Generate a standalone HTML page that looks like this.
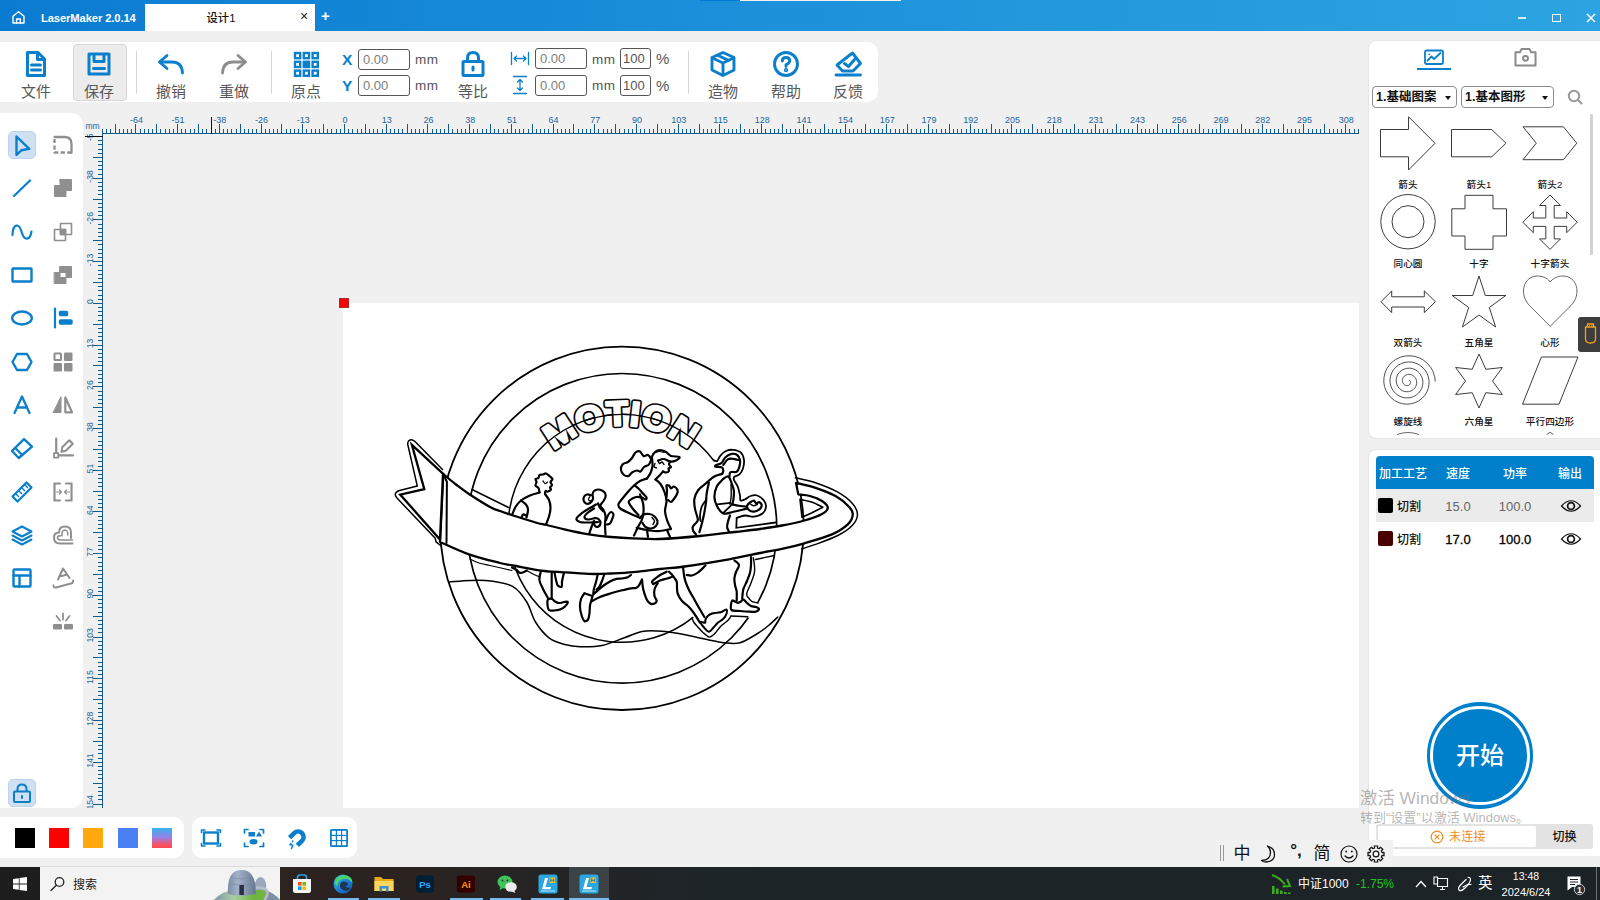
<!DOCTYPE html>
<html lang="zh-CN">
<head>
<meta charset="utf-8">
<title>LaserMaker 2.0.14</title>
<style>
*{box-sizing:border-box;margin:0;padding:0}
html,body{width:1600px;height:900px;overflow:hidden;background:#f0f0f0;font-family:"Liberation Sans","Noto Sans CJK SC",sans-serif;}
.abs,#app>*{position:absolute}
#app{position:relative;width:1600px;height:900px;overflow:hidden;background:#f0f0f0}
#app div{white-space:nowrap}
.panel{background:#fff}
#title{left:0;top:0;width:1600px;height:31px;background:linear-gradient(90deg,#0b7bd1 0%,#1f94db 55%,#2da4e1 100%)}
.lbl{font-size:15px;color:#585858;line-height:18px;text-align:center;width:60px}
.mm{font-size:13.5px;color:#555;line-height:16px;letter-spacing:0.6px}
.inp{border:1px solid #555;border-radius:3px;background:#fff;height:21px;font-size:13px;line-height:19px;color:#7e7e7e;padding-left:4px}
.sep{width:1px;background:#d4d4d4;top:51px;height:43px}
.ic{fill:none;stroke:#0a7fcb;stroke-width:3;stroke-linejoin:round;stroke-linecap:round}
.slab{width:80px;text-align:center;font-size:9.6px;line-height:16px;color:#111;font-weight:500;letter-spacing:0.1px}
.dd{height:22px;border:1px solid #8c8c8c;border-radius:4px;background:#fff;font-size:12.5px;line-height:20px;color:#111;font-weight:bold;padding-left:3px}
.dd i{position:absolute;right:5px;top:9px;border-left:3.5px solid transparent;border-right:3.5px solid transparent;border-top:4px solid #111}
.th{font-size:12px;line-height:16px;color:#fff;font-weight:500;text-align:center}
.td{font-size:13px;line-height:16px;text-align:center}
.tb{color:#fff;font-size:12px;line-height:16px}
</style>
</head>
<body>
<div id="app">
<!-- TITLE BAR -->
<div id="title"></div>
<div style="left:700px;top:0;width:40px;height:1px;background:#0078d7"></div>
<div style="left:740px;top:0;width:161px;height:1px;background:#f0f0f0"></div>
<svg style="left:11px;top:9.5px" width="15" height="15" viewBox="0 0 15 15" fill="none" stroke="#fff" stroke-width="1.4" stroke-linejoin="round" stroke-linecap="round"><path d="M2 6.2 L7.5 1.8 L13 6.2 V13 H2 Z"/><path d="M5.6 13 V9 H9.4 V13"/></svg>
<div style="left:41px;top:10px;font-size:11.2px;color:#fff;line-height:16px;font-weight:bold;letter-spacing:-0.1px">LaserMaker 2.0.14</div>
<div style="left:145px;top:4px;width:170px;height:27px;background:#fff"></div>
<div style="left:145px;width:152px;top:10px;text-align:center;font-size:11.3px;line-height:16px;color:#111;font-weight:500">设计1</div>
<div style="left:300px;top:8px;font-size:14px;line-height:16px;color:#222">×</div>
<div style="left:321px;top:8px;font-size:15px;line-height:16px;color:#fff;font-weight:bold">+</div>
<div style="left:1518px;top:17px;width:8px;height:1.5px;background:#d8ecf8"></div>
<div style="left:1552px;top:14px;width:8.5px;height:8px;border:1.5px solid #fff"></div>
<svg style="left:1585.5px;top:13px" width="10" height="10" viewBox="0 0 10 10" stroke="#fff" stroke-width="1.5"><path d="M1 1 L9 9 M9 1 L1 9"/></svg>

<!-- TOP TOOLBAR -->
<div class="panel" style="left:-1px;top:42px;width:879px;height:60px;border-radius:0 10px 10px 0"></div>
<div style="left:73px;top:44px;width:54px;height:57px;background:#ececec;border:1px solid #d6d6d6;border-radius:4px"></div>
<div class="lbl" style="left:6px;top:83px">文件</div>
<div class="lbl" style="left:69px;top:83px">保存</div>
<div class="lbl" style="left:141px;top:83px">撤销</div>
<div class="lbl" style="left:204px;top:83px">重做</div>
<div class="lbl" style="left:276px;top:83px">原点</div>
<div class="lbl" style="left:443px;top:83px">等比</div>
<div class="lbl" style="left:693px;top:83px">造物</div>
<div class="lbl" style="left:756px;top:83px">帮助</div>
<div class="lbl" style="left:818px;top:83px">反馈</div>
<div class="sep" style="left:136px"></div>
<div class="sep" style="left:271px"></div>
<div class="sep" style="left:688px"></div>
<svg class="ic" style="left:24px;top:50px" width="24" height="28" viewBox="0 0 24 28"><path d="M3.5 2.5 H14 L20.5 9 V25.5 H3.5 Z"/><path d="M13.5 3 V9.500 H20"/><path d="M7.5 15 H16.500 M7.500 20 H16.500"/></svg>
<svg class="ic" style="left:86px;top:51px" width="26" height="26" viewBox="0 0 26 26"><path d="M3 3 H23 V23 H3 Z"/><path d="M8 3.500 V10.500 H18 V3.500"/><path d="M7.500 17.500 H18.500"/></svg>
<svg class="ic" style="left:156px;top:52px;stroke-width:2.8" width="30" height="24" viewBox="0 0 30 24"><path d="M11 3.500 L3.500 10 L11 16.500"/><path d="M4 10 H16 Q26 10 26.500 21"/></svg>
<svg class="ic" style="left:219px;top:52px;stroke:#8d8d8d;stroke-width:2.8" width="30" height="24" viewBox="0 0 30 24"><path d="M19 3.500 L26.500 10 L19 16.500"/><path d="M26 10 H14 Q4 10 3.500 21"/></svg>
<svg class="ic" style="left:292px;top:50px;stroke-width:2.4;stroke-linejoin:miter" width="28" height="28" viewBox="0 0 28 28"><rect x="3.0" y="3.0" width="5.2" height="5.2"/><rect x="11.8" y="3.0" width="5.2" height="5.2"/><rect x="20.6" y="3.0" width="5.2" height="5.2"/><rect x="3.0" y="11.8" width="5.2" height="5.2"/><rect x="10.600000000000001" y="10.600000000000001" width="7.6" height="7.6" fill="#0a7fcb" stroke="none"/><rect x="20.6" y="11.8" width="5.2" height="5.2"/><rect x="3.0" y="20.6" width="5.2" height="5.2"/><rect x="11.8" y="20.6" width="5.2" height="5.2"/><rect x="20.6" y="20.6" width="5.2" height="5.2"/></svg>
<div style="left:342px;top:51px;font-size:15.5px;line-height:18px;font-weight:bold;color:#0a7fcb">X</div>
<div style="left:342px;top:77px;font-size:15.5px;line-height:18px;font-weight:bold;color:#0a7fcb">Y</div>
<div class="inp" style="left:358px;top:49px;width:52px">0.00</div>
<div class="inp" style="left:358px;top:75px;width:52px">0.00</div>
<div class="mm" style="left:415px;top:52px">mm</div>
<div class="mm" style="left:415px;top:78px">mm</div>
<svg class="ic" style="left:460px;top:50px" width="26" height="28" viewBox="0 0 26 28"><rect x="3" y="11.500" width="20" height="14" rx="1"/><path d="M7.500 11 V8 Q7.500 2.500 13 2.500 Q18.500 2.500 18.500 8 V11"/><path d="M13 17 V20"/></svg>
<svg class="ic" style="left:510px;top:51px;stroke-width:1.3" width="20" height="15" viewBox="0 0 20 15"><path d="M1.500 1.500 V13.500 M18.500 1.500 V13.500 M4 7.500 H16 M6.500 5 L4 7.500 L6.500 10 M13.500 5 L16 7.500 L13.500 10"/></svg>
<svg class="ic" style="left:512px;top:75px;stroke-width:1.3" width="16" height="20" viewBox="0 0 16 20"><path d="M1.500 1.500 H14.500 M1.500 18.500 H14.500 M8 4.500 V15.500 M5.500 7 L8 4.500 L10.500 7 M5.500 13 L8 15.500 L10.500 13"/></svg>
<div class="inp" style="left:535px;top:48px;width:52px">0.00</div>
<div class="inp" style="left:535px;top:75px;width:52px">0.00</div>
<div class="mm" style="left:592px;top:52px">mm</div>
<div class="mm" style="left:592px;top:78px">mm</div>
<div class="inp" style="left:620px;top:48px;width:31px;color:#555;padding-left:2px">100</div>
<div class="inp" style="left:620px;top:75px;width:31px;color:#555;padding-left:2px">100</div>
<div style="left:656px;top:50px;font-size:15px;line-height:18px;color:#555">%</div>
<div style="left:656px;top:77px;font-size:15px;line-height:18px;color:#555">%</div>
<svg class="ic" style="left:709px;top:50px;stroke-width:2.9" width="28" height="28" viewBox="0 0 28 28"><path d="M14 2.500 L25 7.500 V20 L14 25.500 L3 20 V7.500 Z"/><path d="M3.500 8 L14 13 L24.500 8 M14 13 V25"/><path d="M8.500 5.200 L19.500 10.400"/></svg>
<svg class="ic" style="left:772px;top:50px;stroke-width:2.9" width="28" height="28" viewBox="0 0 28 28"><circle cx="14" cy="14" r="11.500"/><path d="M10.300 11 Q10.300 7.500 14 7.500 Q17.700 7.500 17.700 10.800 Q17.700 13 14 14.800 V16.500"/><circle cx="14" cy="20.200" r="0.700" fill="#0a7fcb"/></svg>
<svg class="ic" style="left:833px;top:49px;stroke-width:2.9" width="30" height="30" viewBox="0 0 30 30"><path d="M4 16 L19.500 4 L27.500 14.500 L20 22 H9.500 Z"/><path d="M11.500 14.500 L15.500 17.500 L21.500 10.500"/><path d="M3 26 H27.500"/></svg>
<!-- LEFT TOOLBAR -->
<div class="panel" style="left:-1px;top:113px;width:84px;height:695px;border-radius:0 12px 12px 0"></div>
<div style="left:8px;top:131px;width:28px;height:28px;background:#cfe0f3;border:1px solid #bcd4ef;border-radius:5px"></div>
<div style="left:8px;top:779px;width:28px;height:28px;background:#cfe0f3;border:1px solid #bcd4ef;border-radius:5px"></div>
<svg style="left:9.5px;top:133px" width="24" height="24" viewBox="0 0 24 24" fill="none" stroke="#0a7fcb" stroke-width="2.4" stroke-linejoin="round" stroke-linecap="round" ><path d="M6.500 3.500 L19.300 15.800 L11.500 17.200 L6.500 22 Z"/></svg>
<svg style="left:9.5px;top:176px" width="24" height="24" viewBox="0 0 24 24" fill="none" stroke="#0a7fcb" stroke-width="2.2" stroke-linejoin="round" stroke-linecap="round" ><path d="M4 20 L20 4.500"/></svg>
<svg style="left:9.5px;top:219.5px" width="24" height="24" viewBox="0 0 24 24" fill="none" stroke="#0a7fcb" stroke-width="2.2" stroke-linejoin="round" stroke-linecap="round" ><path d="M2.500 15 C3 3 9 3 11.500 11.500 C14 21 20 21 21.500 11.500"/></svg>
<svg style="left:9.5px;top:263px" width="24" height="24" viewBox="0 0 24 24" fill="none" stroke="#0a7fcb" stroke-width="2.4" stroke-linejoin="round" stroke-linecap="round" ><rect x="2.500" y="5.500" width="19" height="13" rx="0.500"/></svg>
<svg style="left:9.5px;top:306px" width="24" height="24" viewBox="0 0 24 24" fill="none" stroke="#0a7fcb" stroke-width="2.4" stroke-linejoin="round" stroke-linecap="round" ><ellipse cx="12" cy="12" rx="9.800" ry="6.500"/></svg>
<svg style="left:9.5px;top:349.5px" width="24" height="24" viewBox="0 0 24 24" fill="none" stroke="#0a7fcb" stroke-width="2.4" stroke-linejoin="round" stroke-linecap="round" ><path d="M7 4 H17 L21.500 12 L17 20 H7 L2.500 12 Z"/></svg>
<svg style="left:9.5px;top:393px" width="24" height="24" viewBox="0 0 24 24" fill="none" stroke="#0a7fcb" stroke-width="2.3" stroke-linejoin="round" stroke-linecap="round" ><path d="M4.500 20 L12 3.500 L19.500 20 M7.200 14.500 H16.800"/></svg>
<svg style="left:9.5px;top:436px" width="24" height="24" viewBox="0 0 24 24" fill="none" stroke="#0a7fcb" stroke-width="2.4" stroke-linejoin="round" stroke-linecap="round" ><path d="M14 3.200 L22 10.700 L8.700 22 L2 15 Z"/><path d="M5.300 12 L12.200 19"/></svg>
<svg style="left:9.5px;top:479.5px" width="24" height="24" viewBox="0 0 24 24" fill="none" stroke="#0a7fcb" stroke-width="2.2" stroke-linejoin="round" stroke-linecap="round" ><path d="M16.500 2.500 L21.500 7.500 L7.500 21.500 L2.500 16.500 Z"/><path d="M6.500 14.500 L8.500 16.500 M9.500 11.500 L11.500 13.500 M12.500 8.500 L14.500 10.500 M15.500 5.500 L17.500 7.500" stroke-width="1.500"/></svg>
<svg style="left:9.5px;top:523px" width="24" height="24" viewBox="0 0 24 24" fill="none" stroke="#0a7fcb" stroke-width="2" stroke-linejoin="round" stroke-linecap="round" ><path d="M12 3.500 L21.500 8.500 L12 13.500 L2.500 8.500 Z"/><path d="M2.500 12.500 L12 17.500 L21.500 12.500"/><path d="M2.500 16.500 L12 21.500 L21.500 16.500"/></svg>
<svg style="left:9.5px;top:566px" width="24" height="24" viewBox="0 0 24 24" fill="none" stroke="#0a7fcb" stroke-width="2.4" stroke-linejoin="round" stroke-linecap="round" ><rect x="3.500" y="3.500" width="17" height="17" rx="1"/><path d="M3.500 9.500 H20.500 M9.500 9.500 V20.500"/></svg>
<svg style="left:9.5px;top:781px" width="24" height="24" viewBox="0 0 24 24" fill="none" stroke="#0a7fcb" stroke-width="2" stroke-linejoin="round" stroke-linecap="round" ><rect x="4" y="10.500" width="16" height="10.500" rx="1"/><path d="M7.500 10 V8 Q7.500 3.500 12 3.500 Q16.500 3.500 16.500 8 V10"/><path d="M12 15 V17"/></svg>
<svg style="left:51px;top:133px" width="24" height="24" viewBox="0 0 24 24" fill="none" stroke="#8f8f8f" stroke-width="2.3" stroke-linejoin="round" stroke-linecap="round" ><path d="M3.500 4 H13.500 Q20.500 4 20.500 11 V19.800"/><path d="M20.500 19.500 H3.500 V4" stroke-dasharray="4.200 2.400" stroke-linecap="butt"/></svg>
<svg style="left:51px;top:176px" width="24" height="24" viewBox="0 0 24 24" fill="none" stroke="#8f8f8f" stroke-width="1" stroke-linejoin="round" stroke-linecap="round" ><path d="M9 3.500 H20.500 V14.500 H15 V20.500 H3.500 V9.500 H9 Z" fill="#8f8f8f"/></svg>
<svg style="left:51px;top:219.5px" width="24" height="24" viewBox="0 0 24 24" fill="none" stroke="#8f8f8f" stroke-width="1.6" stroke-linejoin="round" stroke-linecap="round" ><rect x="9.500" y="3.500" width="11" height="11"/><rect x="3.500" y="9.500" width="11" height="11"/><rect x="9.500" y="9.500" width="5" height="5" fill="#8f8f8f"/></svg>
<svg style="left:51px;top:263px" width="24" height="24" viewBox="0 0 24 24" fill="none" stroke="#8f8f8f" stroke-width="1" stroke-linejoin="round" stroke-linecap="round" ><path d="M9 3.500 H20.500 V14.500 H15 V9.500 H9 Z M3.500 9.500 H9 V14.500 H15 V20.500 H3.500 Z" fill="#8f8f8f"/></svg>
<svg style="left:51px;top:306px" width="24" height="24" viewBox="0 0 24 24" fill="none" stroke="#0a7fcb" stroke-width="1.5" stroke-linejoin="round" stroke-linecap="round" ><path d="M4 2.500 V21.500" stroke-width="2.200"/><rect x="8.500" y="5.500" width="8" height="4" rx="1" fill="#0a7fcb"/><rect x="8.500" y="14" width="12.500" height="4" rx="1" fill="#0a7fcb"/></svg>
<svg style="left:51px;top:349.5px" width="24" height="24" viewBox="0 0 24 24" fill="none" stroke="#8f8f8f" stroke-width="1.5" stroke-linejoin="round" stroke-linecap="round" ><rect x="3.500" y="3.500" width="6.500" height="6.500" rx="0.500" stroke-width="2"/><rect x="13" y="2.500" width="8.500" height="8.500" rx="1" fill="#8f8f8f" stroke="none"/><rect x="2.500" y="13" width="8.500" height="8.500" rx="1" fill="#8f8f8f" stroke="none"/><rect x="13" y="13" width="8.500" height="8.500" rx="1" fill="#8f8f8f" stroke="none"/></svg>
<svg style="left:51px;top:393px" width="24" height="24" viewBox="0 0 24 24" fill="none" stroke="#8f8f8f" stroke-width="1" stroke-linejoin="round" stroke-linecap="round" ><path d="M10 4 V19.500 H2.500 Z" fill="#8f8f8f"/><path d="M14.300 4.500 V19.300 H21 Z" stroke-width="2.200"/></svg>
<svg style="left:51px;top:436px" width="24" height="24" viewBox="0 0 24 24" fill="none" stroke="#8f8f8f" stroke-width="2.2" stroke-linejoin="round" stroke-linecap="round" ><path d="M5.200 2.500 V17"/><path d="M7.500 19.300 H22"/><rect x="3" y="17.200" width="4.400" height="4.400" stroke-width="1.800"/><path d="M10.500 15.800 L11.200 11.300 L18.300 4.300 L21.800 7.800 L14.800 14.800 Z" stroke-width="2"/></svg>
<svg style="left:51px;top:479.5px" width="24" height="24" viewBox="0 0 24 24" fill="none" stroke="#8f8f8f" stroke-width="2" stroke-linejoin="round" stroke-linecap="round" ><path d="M9 3.500 H3.500 V20.500 H9 M15 3.500 H20.500 V20.500 H15" stroke-width="2.200" stroke-linejoin="miter"/><path d="M5.500 12 H10.500 M8.500 10 L10.500 12 L8.500 14 M18.500 12 H13.500 M15.500 10 L13.500 12 L15.500 14" stroke-width="1.200"/></svg>
<svg style="left:51px;top:523px" width="24" height="24" viewBox="0 0 24 24" fill="none" stroke="#8f8f8f" stroke-width="2" stroke-linejoin="round" stroke-linecap="round" ><path d="M21.500 20.500 H9 Q3 20.500 3 14.500 Q3 9.500 8 9.500 Q8 3.500 14 3.500 Q20 3.500 20 9.500 V15"/><path d="M21.500 17 H10 Q6.500 17 6.500 14.500 Q6.500 12.500 11 12.800 Q10.500 7 14 7 Q17 7 16.800 12" stroke-width="1.500"/></svg>
<svg style="left:51px;top:566px" width="24" height="24" viewBox="0 0 24 24" fill="none" stroke="#8f8f8f" stroke-width="2" stroke-linejoin="round" stroke-linecap="round" ><path d="M7 13.500 L12 2.500 L18.500 12 M8.500 10.500 L15.500 8.800" stroke-width="2"/><path d="M2.500 19.500 Q2.500 22 5 21.500 L20 17.500 Q22.500 17 22 14.500"/></svg>
<svg style="left:51px;top:609.5px" width="24" height="24" viewBox="0 0 24 24" fill="none" stroke="#8f8f8f" stroke-width="1.5" stroke-linejoin="round" stroke-linecap="round" ><rect x="2" y="14" width="9" height="5.500" rx="1" fill="#8f8f8f" stroke="none"/><rect x="13" y="14" width="9" height="5.500" rx="1" fill="#8f8f8f" stroke="none"/><path d="M12 3.500 V9.500 M5.500 6 L9 10.500 M18.500 6 L15 10.500" stroke-width="1.800"/></svg>
<!-- CANVAS -->
<div style="left:343px;top:303px;width:1016px;height:505px;background:#fff"></div>
<div style="left:339px;top:298px;width:10px;height:10px;background:#ff0000;border:1px solid #b4282a"></div>
<svg style="left:84px;top:112px" width="1276" height="697" viewBox="84 112 1276 697" shape-rendering="crispEdges" font-family="Liberation Sans, sans-serif" font-size="9" fill="#2266a0">
<clipPath id="vclip"><rect x="84" y="134" width="20" height="674"/></clipPath>
<rect x="102" y="133" width="1257" height="1" fill="#115a8c"/>
<rect x="102" y="133" width="1" height="675" fill="#115a8c"/>
<path d="M102 129h1v4h-1zM106 129h1v4h-1zM110 129h1v4h-1zM115 124h1v9h-1zM119 129h1v4h-1zM123 129h1v4h-1zM127 129h1v4h-1zM131 129h1v4h-1zM135 124h1v9h-1zM140 129h1v4h-1zM144 129h1v4h-1zM148 129h1v4h-1zM152 129h1v4h-1zM156 124h1v9h-1zM160 129h1v4h-1zM165 129h1v4h-1zM169 129h1v4h-1zM173 129h1v4h-1zM177 124h1v9h-1zM181 129h1v4h-1zM185 129h1v4h-1zM190 129h1v4h-1zM194 129h1v4h-1zM198 124h1v9h-1zM202 129h1v4h-1zM206 129h1v4h-1zM211 129h1v4h-1zM215 129h1v4h-1zM219 124h1v9h-1zM223 129h1v4h-1zM227 129h1v4h-1zM231 129h1v4h-1zM236 129h1v4h-1zM240 124h1v9h-1zM244 129h1v4h-1zM248 129h1v4h-1zM252 129h1v4h-1zM256 129h1v4h-1zM261 124h1v9h-1zM265 129h1v4h-1zM269 129h1v4h-1zM273 129h1v4h-1zM277 129h1v4h-1zM281 124h1v9h-1zM286 129h1v4h-1zM290 129h1v4h-1zM294 129h1v4h-1zM298 129h1v4h-1zM302 124h1v9h-1zM306 129h1v4h-1zM311 129h1v4h-1zM315 129h1v4h-1zM319 129h1v4h-1zM323 124h1v9h-1zM327 129h1v4h-1zM331 129h1v4h-1zM336 129h1v4h-1zM340 129h1v4h-1zM344 124h1v9h-1zM348 129h1v4h-1zM352 129h1v4h-1zM357 129h1v4h-1zM361 129h1v4h-1zM365 124h1v9h-1zM369 129h1v4h-1zM373 129h1v4h-1zM377 129h1v4h-1zM382 129h1v4h-1zM386 124h1v9h-1zM390 129h1v4h-1zM394 129h1v4h-1zM398 129h1v4h-1zM402 129h1v4h-1zM407 124h1v9h-1zM411 129h1v4h-1zM415 129h1v4h-1zM419 129h1v4h-1zM423 129h1v4h-1zM427 124h1v9h-1zM432 129h1v4h-1zM436 129h1v4h-1zM440 129h1v4h-1zM444 129h1v4h-1zM448 124h1v9h-1zM452 129h1v4h-1zM457 129h1v4h-1zM461 129h1v4h-1zM465 129h1v4h-1zM469 124h1v9h-1zM473 129h1v4h-1zM477 129h1v4h-1zM482 129h1v4h-1zM486 129h1v4h-1zM490 124h1v9h-1zM494 129h1v4h-1zM498 129h1v4h-1zM503 129h1v4h-1zM507 129h1v4h-1zM511 124h1v9h-1zM515 129h1v4h-1zM519 129h1v4h-1zM523 129h1v4h-1zM528 129h1v4h-1zM532 124h1v9h-1zM536 129h1v4h-1zM540 129h1v4h-1zM544 129h1v4h-1zM548 129h1v4h-1zM553 124h1v9h-1zM557 129h1v4h-1zM561 129h1v4h-1zM565 129h1v4h-1zM569 129h1v4h-1zM573 124h1v9h-1zM578 129h1v4h-1zM582 129h1v4h-1zM586 129h1v4h-1zM590 129h1v4h-1zM594 124h1v9h-1zM598 129h1v4h-1zM603 129h1v4h-1zM607 129h1v4h-1zM611 129h1v4h-1zM615 124h1v9h-1zM619 129h1v4h-1zM624 129h1v4h-1zM628 129h1v4h-1zM632 129h1v4h-1zM636 124h1v9h-1zM640 129h1v4h-1zM644 129h1v4h-1zM649 129h1v4h-1zM653 129h1v4h-1zM657 124h1v9h-1zM661 129h1v4h-1zM665 129h1v4h-1zM669 129h1v4h-1zM674 129h1v4h-1zM678 124h1v9h-1zM682 129h1v4h-1zM686 129h1v4h-1zM690 129h1v4h-1zM694 129h1v4h-1zM699 124h1v9h-1zM703 129h1v4h-1zM707 129h1v4h-1zM711 129h1v4h-1zM715 129h1v4h-1zM719 124h1v9h-1zM724 129h1v4h-1zM728 129h1v4h-1zM732 129h1v4h-1zM736 129h1v4h-1zM740 124h1v9h-1zM744 129h1v4h-1zM749 129h1v4h-1zM753 129h1v4h-1zM757 129h1v4h-1zM761 124h1v9h-1zM765 129h1v4h-1zM770 129h1v4h-1zM774 129h1v4h-1zM778 129h1v4h-1zM782 124h1v9h-1zM786 129h1v4h-1zM790 129h1v4h-1zM795 129h1v4h-1zM799 129h1v4h-1zM803 124h1v9h-1zM807 129h1v4h-1zM811 129h1v4h-1zM815 129h1v4h-1zM820 129h1v4h-1zM824 124h1v9h-1zM828 129h1v4h-1zM832 129h1v4h-1zM836 129h1v4h-1zM840 129h1v4h-1zM845 124h1v9h-1zM849 129h1v4h-1zM853 129h1v4h-1zM857 129h1v4h-1zM861 129h1v4h-1zM865 124h1v9h-1zM870 129h1v4h-1zM874 129h1v4h-1zM878 129h1v4h-1zM882 129h1v4h-1zM886 124h1v9h-1zM890 129h1v4h-1zM895 129h1v4h-1zM899 129h1v4h-1zM903 129h1v4h-1zM907 124h1v9h-1zM911 129h1v4h-1zM916 129h1v4h-1zM920 129h1v4h-1zM924 129h1v4h-1zM928 124h1v9h-1zM932 129h1v4h-1zM936 129h1v4h-1zM941 129h1v4h-1zM945 129h1v4h-1zM949 124h1v9h-1zM953 129h1v4h-1zM957 129h1v4h-1zM961 129h1v4h-1zM966 129h1v4h-1zM970 124h1v9h-1zM974 129h1v4h-1zM978 129h1v4h-1zM982 129h1v4h-1zM986 129h1v4h-1zM991 124h1v9h-1zM995 129h1v4h-1zM999 129h1v4h-1zM1003 129h1v4h-1zM1007 129h1v4h-1zM1011 124h1v9h-1zM1016 129h1v4h-1zM1020 129h1v4h-1zM1024 129h1v4h-1zM1028 129h1v4h-1zM1032 124h1v9h-1zM1037 129h1v4h-1zM1041 129h1v4h-1zM1045 129h1v4h-1zM1049 129h1v4h-1zM1053 124h1v9h-1zM1057 129h1v4h-1zM1062 129h1v4h-1zM1066 129h1v4h-1zM1070 129h1v4h-1zM1074 124h1v9h-1zM1078 129h1v4h-1zM1082 129h1v4h-1zM1087 129h1v4h-1zM1091 129h1v4h-1zM1095 124h1v9h-1zM1099 129h1v4h-1zM1103 129h1v4h-1zM1107 129h1v4h-1zM1112 129h1v4h-1zM1116 124h1v9h-1zM1120 129h1v4h-1zM1124 129h1v4h-1zM1128 129h1v4h-1zM1132 129h1v4h-1zM1137 124h1v9h-1zM1141 129h1v4h-1zM1145 129h1v4h-1zM1149 129h1v4h-1zM1153 129h1v4h-1zM1157 124h1v9h-1zM1162 129h1v4h-1zM1166 129h1v4h-1zM1170 129h1v4h-1zM1174 129h1v4h-1zM1178 124h1v9h-1zM1183 129h1v4h-1zM1187 129h1v4h-1zM1191 129h1v4h-1zM1195 129h1v4h-1zM1199 124h1v9h-1zM1203 129h1v4h-1zM1208 129h1v4h-1zM1212 129h1v4h-1zM1216 129h1v4h-1zM1220 124h1v9h-1zM1224 129h1v4h-1zM1228 129h1v4h-1zM1233 129h1v4h-1zM1237 129h1v4h-1zM1241 124h1v9h-1zM1245 129h1v4h-1zM1249 129h1v4h-1zM1253 129h1v4h-1zM1258 129h1v4h-1zM1262 124h1v9h-1zM1266 129h1v4h-1zM1270 129h1v4h-1zM1274 129h1v4h-1zM1278 129h1v4h-1zM1283 124h1v9h-1zM1287 129h1v4h-1zM1291 129h1v4h-1zM1295 129h1v4h-1zM1299 129h1v4h-1zM1303 124h1v9h-1zM1308 129h1v4h-1zM1312 129h1v4h-1zM1316 129h1v4h-1zM1320 129h1v4h-1zM1324 124h1v9h-1zM1329 129h1v4h-1zM1333 129h1v4h-1zM1337 129h1v4h-1zM1341 129h1v4h-1zM1345 124h1v9h-1zM1349 129h1v4h-1zM1354 129h1v4h-1zM1358 129h1v4h-1zM93 136h9v1h-9zM98 140h4v1h-4zM98 144h4v1h-4zM98 149h4v1h-4zM98 153h4v1h-4zM93 157h9v1h-9zM98 161h4v1h-4zM98 165h4v1h-4zM98 169h4v1h-4zM98 174h4v1h-4zM93 178h9v1h-9zM98 182h4v1h-4zM98 186h4v1h-4zM98 190h4v1h-4zM98 194h4v1h-4zM93 199h9v1h-9zM98 203h4v1h-4zM98 207h4v1h-4zM98 211h4v1h-4zM98 215h4v1h-4zM93 219h9v1h-9zM98 224h4v1h-4zM98 228h4v1h-4zM98 232h4v1h-4zM98 236h4v1h-4zM93 240h9v1h-9zM98 244h4v1h-4zM98 249h4v1h-4zM98 253h4v1h-4zM98 257h4v1h-4zM93 261h9v1h-9zM98 265h4v1h-4zM98 270h4v1h-4zM98 274h4v1h-4zM98 278h4v1h-4zM93 282h9v1h-9zM98 286h4v1h-4zM98 290h4v1h-4zM98 295h4v1h-4zM98 299h4v1h-4zM93 303h9v1h-9zM98 307h4v1h-4zM98 311h4v1h-4zM98 315h4v1h-4zM98 320h4v1h-4zM93 324h9v1h-9zM98 328h4v1h-4zM98 332h4v1h-4zM98 336h4v1h-4zM98 340h4v1h-4zM93 345h9v1h-9zM98 349h4v1h-4zM98 353h4v1h-4zM98 357h4v1h-4zM98 361h4v1h-4zM93 365h9v1h-9zM98 370h4v1h-4zM98 374h4v1h-4zM98 378h4v1h-4zM98 382h4v1h-4zM93 386h9v1h-9zM98 391h4v1h-4zM98 395h4v1h-4zM98 399h4v1h-4zM98 403h4v1h-4zM93 407h9v1h-9zM98 411h4v1h-4zM98 416h4v1h-4zM98 420h4v1h-4zM98 424h4v1h-4zM93 428h9v1h-9zM98 432h4v1h-4zM98 436h4v1h-4zM98 441h4v1h-4zM98 445h4v1h-4zM93 449h9v1h-9zM98 453h4v1h-4zM98 457h4v1h-4zM98 461h4v1h-4zM98 466h4v1h-4zM93 470h9v1h-9zM98 474h4v1h-4zM98 478h4v1h-4zM98 482h4v1h-4zM98 486h4v1h-4zM93 491h9v1h-9zM98 495h4v1h-4zM98 499h4v1h-4zM98 503h4v1h-4zM98 507h4v1h-4zM93 511h9v1h-9zM98 516h4v1h-4zM98 520h4v1h-4zM98 524h4v1h-4zM98 528h4v1h-4zM93 532h9v1h-9zM98 537h4v1h-4zM98 541h4v1h-4zM98 545h4v1h-4zM98 549h4v1h-4zM93 553h9v1h-9zM98 557h4v1h-4zM98 562h4v1h-4zM98 566h4v1h-4zM98 570h4v1h-4zM93 574h9v1h-9zM98 578h4v1h-4zM98 582h4v1h-4zM98 587h4v1h-4zM98 591h4v1h-4zM93 595h9v1h-9zM98 599h4v1h-4zM98 603h4v1h-4zM98 607h4v1h-4zM98 612h4v1h-4zM93 616h9v1h-9zM98 620h4v1h-4zM98 624h4v1h-4zM98 628h4v1h-4zM98 632h4v1h-4zM93 637h9v1h-9zM98 641h4v1h-4zM98 645h4v1h-4zM98 649h4v1h-4zM98 653h4v1h-4zM93 657h9v1h-9zM98 662h4v1h-4zM98 666h4v1h-4zM98 670h4v1h-4zM98 674h4v1h-4zM93 678h9v1h-9zM98 683h4v1h-4zM98 687h4v1h-4zM98 691h4v1h-4zM98 695h4v1h-4zM93 699h9v1h-9zM98 703h4v1h-4zM98 708h4v1h-4zM98 712h4v1h-4zM98 716h4v1h-4zM93 720h9v1h-9zM98 724h4v1h-4zM98 728h4v1h-4zM98 733h4v1h-4zM98 737h4v1h-4zM93 741h9v1h-9zM98 745h4v1h-4zM98 749h4v1h-4zM98 753h4v1h-4zM98 758h4v1h-4zM93 762h9v1h-9zM98 766h4v1h-4zM98 770h4v1h-4zM98 774h4v1h-4zM98 778h4v1h-4zM93 783h9v1h-9zM98 787h4v1h-4zM98 791h4v1h-4zM98 795h4v1h-4zM98 799h4v1h-4zM93 804h9v1h-9z" fill="#115a8c"/>
<text x="136.4" y="123" text-anchor="middle">-64</text>
<text x="178.1" y="123" text-anchor="middle">-51</text>
<text x="219.8" y="123" text-anchor="middle">-38</text>
<text x="261.6" y="123" text-anchor="middle">-26</text>
<text x="303.3" y="123" text-anchor="middle">-13</text>
<text x="345.0" y="123" text-anchor="middle">0</text>
<text x="386.7" y="123" text-anchor="middle">13</text>
<text x="428.4" y="123" text-anchor="middle">26</text>
<text x="470.2" y="123" text-anchor="middle">38</text>
<text x="511.9" y="123" text-anchor="middle">51</text>
<text x="553.6" y="123" text-anchor="middle">64</text>
<text x="595.3" y="123" text-anchor="middle">77</text>
<text x="637.0" y="123" text-anchor="middle">90</text>
<text x="678.7" y="123" text-anchor="middle">103</text>
<text x="720.5" y="123" text-anchor="middle">115</text>
<text x="762.2" y="123" text-anchor="middle">128</text>
<text x="803.9" y="123" text-anchor="middle">141</text>
<text x="845.6" y="123" text-anchor="middle">154</text>
<text x="887.3" y="123" text-anchor="middle">167</text>
<text x="929.0" y="123" text-anchor="middle">179</text>
<text x="970.8" y="123" text-anchor="middle">192</text>
<text x="1012.5" y="123" text-anchor="middle">205</text>
<text x="1054.2" y="123" text-anchor="middle">218</text>
<text x="1095.9" y="123" text-anchor="middle">231</text>
<text x="1137.6" y="123" text-anchor="middle">243</text>
<text x="1179.3" y="123" text-anchor="middle">256</text>
<text x="1221.1" y="123" text-anchor="middle">269</text>
<text x="1262.8" y="123" text-anchor="middle">282</text>
<text x="1304.5" y="123" text-anchor="middle">295</text>
<text x="1346.2" y="123" text-anchor="middle">308</text>
<g clip-path="url(#vclip)"><text transform="translate(92.500 134.8) rotate(-90)" text-anchor="middle" font-size="8.6">-51</text></g>
<g clip-path="url(#vclip)"><text transform="translate(92.500 176.5) rotate(-90)" text-anchor="middle" font-size="8.6">-38</text></g>
<g clip-path="url(#vclip)"><text transform="translate(92.500 218.3) rotate(-90)" text-anchor="middle" font-size="8.6">-26</text></g>
<g clip-path="url(#vclip)"><text transform="translate(92.500 260.0) rotate(-90)" text-anchor="middle" font-size="8.6">-13</text></g>
<g clip-path="url(#vclip)"><text transform="translate(92.500 301.7) rotate(-90)" text-anchor="middle" font-size="8.6">0</text></g>
<g clip-path="url(#vclip)"><text transform="translate(92.500 343.4) rotate(-90)" text-anchor="middle" font-size="8.6">13</text></g>
<g clip-path="url(#vclip)"><text transform="translate(92.500 385.1) rotate(-90)" text-anchor="middle" font-size="8.6">26</text></g>
<g clip-path="url(#vclip)"><text transform="translate(92.500 426.9) rotate(-90)" text-anchor="middle" font-size="8.6">38</text></g>
<g clip-path="url(#vclip)"><text transform="translate(92.500 468.6) rotate(-90)" text-anchor="middle" font-size="8.6">51</text></g>
<g clip-path="url(#vclip)"><text transform="translate(92.500 510.3) rotate(-90)" text-anchor="middle" font-size="8.6">64</text></g>
<g clip-path="url(#vclip)"><text transform="translate(92.500 552.0) rotate(-90)" text-anchor="middle" font-size="8.6">77</text></g>
<g clip-path="url(#vclip)"><text transform="translate(92.500 593.7) rotate(-90)" text-anchor="middle" font-size="8.6">90</text></g>
<g clip-path="url(#vclip)"><text transform="translate(92.500 635.4) rotate(-90)" text-anchor="middle" font-size="8.6">103</text></g>
<g clip-path="url(#vclip)"><text transform="translate(92.500 677.2) rotate(-90)" text-anchor="middle" font-size="8.6">115</text></g>
<g clip-path="url(#vclip)"><text transform="translate(92.500 718.9) rotate(-90)" text-anchor="middle" font-size="8.6">128</text></g>
<g clip-path="url(#vclip)"><text transform="translate(92.500 760.6) rotate(-90)" text-anchor="middle" font-size="8.6">141</text></g>
<g clip-path="url(#vclip)"><text transform="translate(92.500 802.3) rotate(-90)" text-anchor="middle" font-size="8.6">154</text></g>
<text x="92.500" y="129" text-anchor="middle" font-size="8.500">mm</text>
<rect x="211" y="117" width="1" height="17" fill="#111"/>
<rect x="85" y="136" width="18" height="1" fill="#111"/>
</svg>
<svg style="left:380px;top:330px" width="500" height="400" viewBox="380 330 500 400" fill="none" stroke="#000" stroke-width="1.5" stroke-linejoin="round" stroke-linecap="round" font-family="Liberation Sans, sans-serif">
<circle cx="622" cy="528.3" r="181.7" stroke-width="1.8"/>
<circle cx="622" cy="528.3" r="154.8" stroke-width="1.7"/>
<path d="M756.7 604.5A154.8 154.8 0 0 1 749.3 616.4" stroke="#fff" stroke-width="3"/>
<path d="M692.8 617.6A114 114 0 1 1 713.9 460.8" stroke-width="1.5"/>
<path d="M449.0 582.0C452.5 581.8 463.0 580.7 470.0 580.5C477.0 580.3 483.8 580.0 491.0 581.0C498.2 582.0 507.1 583.2 513.0 586.7C519.0 590.2 523.0 596.1 526.7 602.0C530.5 607.9 531.8 616.0 535.5 622.0C539.2 628.0 544.1 634.0 549.0 637.8C553.9 641.5 559.8 643.0 565.0 644.5C570.2 646.0 573.8 646.5 580.0 646.7C586.2 646.9 594.6 647.0 602.0 645.5C609.4 644.0 617.7 640.1 624.4 637.8C631.1 635.5 636.4 632.6 642.0 631.5C647.6 630.4 652.4 630.8 658.0 631.0C663.6 631.2 669.2 632.0 675.5 633.0C681.8 634.0 689.9 635.8 695.5 637.0C701.1 638.2 704.2 639.0 709.0 640.0C713.8 641.0 719.2 642.3 724.4 642.8C729.6 643.3 734.6 644.3 740.0 642.8C745.4 641.3 752.0 636.8 756.7 634.0C761.4 631.2 764.5 628.8 768.0 626.0C771.5 623.2 776.2 618.5 777.8 617.0" stroke-width="1.5"/>
<path id="marc" d="M552.4 452.4A103 103 0 0 1 692.2 453.0" stroke="none"/>
<text font-size="35" font-weight="bold" fill="#000" stroke="#000" stroke-width="5.3" stroke-linejoin="round"><textPath href="#marc" startOffset="2" textLength="146" lengthAdjust="spacingAndGlyphs">MOTION</textPath></text>
<text font-size="35" font-weight="bold" fill="#fff" stroke="#fff" stroke-width="2" stroke-linejoin="round" aria-hidden="true"><textPath href="#marc" startOffset="2" textLength="146" lengthAdjust="spacingAndGlyphs">MOTION</textPath></text>
<path d="M547.2 442.3A114 114 0 0 1 698.3 443.6" stroke-width="1.2"/>
<path d="M539.5 492.5C539.3 491.8 539.2 489.2 538.5 488.0C537.8 486.8 535.8 486.5 535.5 485.5C535.2 484.5 536.5 483.1 536.5 482.0C536.5 480.9 535.2 479.7 535.5 479.0C535.8 478.3 537.8 478.7 538.5 478.0C539.2 477.3 538.8 475.6 539.5 475.0C540.2 474.4 541.9 474.8 543.0 474.5C544.1 474.2 544.9 473.2 546.0 473.5C547.1 473.8 548.4 475.1 549.5 476.0C550.6 476.9 552.3 478.0 552.5 479.0C552.7 480.0 550.6 481.0 550.5 482.0C550.4 483.0 552.1 484.1 552.0 485.0C551.9 485.9 550.2 486.8 550.0 487.5C549.8 488.2 551.3 488.8 551.0 489.5C550.7 490.2 548.9 491.2 548.0 491.5C547.1 491.8 546.0 490.6 545.5 491.0C545.0 491.4 545.1 493.5 545.0 494.0" stroke-width="2.2"/>
<path d="M543.0 481.0C543.3 481.4 544.2 483.3 545.0 483.5C545.8 483.7 547.1 482.2 547.5 482.0" stroke-width="1.3"/>
<path d="M539.5 492.5C537.9 493.0 533.1 494.2 530.0 495.5C526.9 496.8 523.4 498.6 521.0 500.5C518.6 502.4 516.9 504.8 515.5 507.0C514.1 509.2 513.0 512.8 512.5 514.0" stroke-width="2.2"/>
<path d="M545.0 494.0C545.7 495.0 548.1 497.7 549.0 500.0C549.9 502.3 550.5 505.2 550.5 508.0C550.5 510.8 549.8 513.8 549.0 516.5C548.2 519.2 546.5 523.2 546.0 524.5" stroke-width="2.2"/>
<path d="M521.0 500.5C521.8 501.2 524.8 502.9 526.0 504.5C527.2 506.1 527.9 507.8 528.0 510.0C528.1 512.2 526.8 516.2 526.5 517.5" stroke-width="2.2"/>
<path d="M521.5 518.0C521.8 517.4 522.2 514.9 523.0 514.5C523.8 514.1 525.5 515.3 526.0 515.5" stroke-width="2.2"/>
<path d="M590.5 495.0C589.9 494.9 588.0 494.3 587.0 494.5C586.0 494.7 585.1 495.1 584.5 496.0C583.9 496.9 583.2 498.8 583.5 500.0C583.8 501.2 584.9 503.0 586.0 503.5C587.1 504.0 588.8 503.8 590.0 503.0C591.2 502.2 592.6 500.4 593.0 499.0C593.4 497.6 592.3 495.8 592.5 494.5C592.7 493.2 593.1 491.8 594.0 491.0C594.9 490.2 596.7 489.6 598.0 489.5C599.3 489.4 600.8 489.9 602.0 490.5C603.2 491.1 604.4 491.9 605.0 493.0C605.6 494.1 605.8 495.7 605.5 497.0C605.2 498.3 604.2 499.9 603.5 501.0C602.8 502.1 602.1 502.7 601.5 503.5C600.9 504.3 600.2 505.6 600.0 506.0" stroke-width="2.2"/>
<path d="M590.0 496.5C589.8 496.9 588.5 498.2 588.5 499.0C588.5 499.8 589.2 500.9 590.0 501.0C590.8 501.1 592.5 499.8 593.0 499.5" stroke-width="1.3"/>
<path d="M596.0 504.5C595.0 505.1 592.3 506.6 590.0 508.0C587.7 509.4 584.2 511.2 582.0 513.0C579.8 514.8 576.8 517.0 576.5 518.5C576.2 520.0 577.8 521.3 580.0 522.0C582.2 522.7 587.0 522.5 590.0 522.5C593.0 522.5 596.7 522.1 598.0 522.0" stroke-width="2.2"/>
<path d="M594.0 508.5C593.0 509.2 589.6 511.1 588.0 512.5C586.4 513.9 584.5 515.8 584.5 517.0C584.5 518.2 586.2 519.3 588.0 519.5C589.8 519.7 593.8 518.2 595.0 518.0" stroke-width="2.2"/>
<path d="M595.0 518.0C595.6 518.2 597.6 518.2 598.5 519.0C599.4 519.8 600.5 521.8 600.5 523.0C600.5 524.2 599.4 526.0 598.5 526.5C597.6 527.0 595.8 526.8 595.0 526.0C594.2 525.2 593.8 522.7 593.5 522.0" stroke-width="2.2"/>
<path d="M600.0 506.0C600.6 506.7 602.6 508.3 603.5 510.0C604.4 511.7 605.2 513.7 605.5 516.0C605.8 518.3 605.0 520.9 605.0 524.0C605.0 527.1 605.4 532.8 605.5 534.5" stroke-width="2.2"/>
<path d="M594.0 521.0C593.6 522.0 592.3 524.8 591.5 527.0C590.7 529.2 589.4 533.2 589.0 534.5" stroke-width="2.2"/>
<path d="M606.0 520.0C606.4 519.1 607.7 515.8 608.5 514.5C609.3 513.2 610.2 512.0 611.0 512.0C611.8 512.0 613.3 513.2 613.5 514.5C613.7 515.8 612.6 518.0 612.0 519.5C611.4 521.0 610.8 522.7 610.0 523.5C609.2 524.3 607.5 524.3 607.0 524.5" stroke-width="2.2"/>
<path d="M598.0 503.5C598.3 504.2 599.2 506.2 600.0 507.5C600.8 508.8 602.5 510.4 603.0 511.0" stroke-width="2.4"/>
<path d="M651.0 459.0C650.6 457.9 649.2 455.5 648.0 455.0C646.8 454.5 644.8 456.6 643.5 456.0C642.2 455.4 641.3 452.1 640.0 451.5C638.7 450.9 636.8 451.4 635.5 452.5C634.2 453.6 633.2 456.4 632.0 458.0C630.8 459.6 629.6 460.9 628.0 462.0C626.4 463.1 623.7 463.2 622.5 464.5C621.3 465.8 620.8 468.2 621.0 470.0C621.2 471.8 622.8 474.0 624.0 475.0C625.2 476.0 627.2 476.4 628.5 476.0C629.8 475.6 630.6 473.4 632.0 472.5C633.4 471.6 635.6 470.7 637.0 470.5C638.4 470.3 639.3 472.1 640.5 471.5C641.7 470.9 642.7 468.1 644.0 467.0C645.3 465.9 647.4 465.9 648.5 465.0C649.6 464.1 650.1 462.5 650.5 461.5C650.9 460.5 651.4 460.1 651.0 459.0Z" stroke-width="2.2"/>
<path d="M652.0 456.5C652.5 455.8 653.7 453.1 655.0 452.0C656.3 450.9 658.2 450.0 660.0 450.0C661.8 450.0 664.2 451.0 666.0 452.0C667.8 453.0 668.8 455.2 671.0 456.0C673.2 456.8 678.7 456.2 679.5 457.0C680.3 457.8 677.6 459.8 676.0 460.5C674.4 461.2 672.0 461.8 670.0 461.5C668.0 461.2 666.0 459.2 664.0 459.0C662.0 458.8 659.0 460.2 658.0 460.5" stroke-width="2.2"/>
<path d="M653.0 453.5C654.0 453.2 657.2 451.7 659.0 451.5C660.8 451.3 663.2 452.3 664.0 452.5" stroke-width="1.2"/>
<path d="M670.0 461.5C669.8 462.0 668.8 463.6 669.0 464.5C669.2 465.4 671.1 466.3 671.0 467.0C670.9 467.7 668.8 467.8 668.5 468.5C668.2 469.2 669.4 470.3 669.0 471.0C668.6 471.7 667.0 472.4 666.0 472.5C665.0 472.6 663.5 471.7 663.0 471.5" stroke-width="2.2"/>
<path d="M658.0 460.5C658.2 461.0 658.8 463.2 659.5 463.5C660.2 463.8 661.2 461.8 662.0 462.0C662.8 462.2 663.7 464.1 664.0 464.5" stroke-width="1.4"/>
<path d="M655.0 463.5C654.8 464.0 653.8 465.8 654.0 466.5C654.2 467.2 656.1 467.8 656.5 468.0" stroke-width="1.4"/>
<path d="M652.0 458.0C652.1 459.3 652.8 463.5 652.5 466.0C652.2 468.5 651.4 470.9 650.5 473.0C649.6 475.1 647.6 477.6 647.0 478.5" stroke-width="2.2"/>
<path d="M663.0 471.5C662.4 472.2 660.8 474.2 659.5 475.5C658.2 476.8 656.2 478.8 655.5 479.5" stroke-width="2.2"/>
<path d="M647.0 478.5C645.8 478.9 642.2 479.8 640.0 481.0C637.8 482.2 636.2 483.5 634.0 485.5C631.8 487.5 629.2 490.4 627.0 493.0C624.8 495.6 622.0 499.0 620.5 501.0C619.0 503.0 618.2 503.7 618.3 505.0C618.4 506.3 619.0 507.6 621.0 509.0C623.0 510.4 626.8 512.0 630.0 513.5C633.2 515.0 638.3 517.2 640.0 518.0" stroke-width="2.2"/>
<path d="M634.5 485.5C635.2 486.1 637.6 487.7 639.0 489.0C640.4 490.3 641.8 492.1 643.0 493.5C644.2 494.9 646.1 496.5 646.5 497.5C646.9 498.5 646.2 499.5 645.5 499.5C644.8 499.5 643.6 497.9 642.0 497.5C640.4 497.1 638.1 496.5 636.0 497.0C633.9 497.5 630.7 499.5 629.5 500.5C628.3 501.5 628.4 501.6 629.0 503.0C629.6 504.4 631.4 507.0 633.0 509.0C634.6 511.0 637.6 514.0 638.5 515.0" stroke-width="2.2"/>
<path d="M640.0 494.5C640.5 495.9 642.4 500.1 643.0 503.0C643.6 505.9 643.7 509.2 643.5 512.0C643.3 514.8 642.9 517.0 642.0 519.5C641.1 522.0 639.3 524.3 638.0 527.0C636.7 529.7 634.7 534.1 634.0 535.5" stroke-width="2.2"/>
<path d="M640.0 518.0C640.6 517.4 642.0 515.2 643.5 514.5C645.0 513.8 647.2 513.8 649.0 514.0C650.8 514.2 652.6 514.8 654.0 516.0C655.4 517.2 657.2 519.3 657.5 521.0C657.8 522.7 657.1 524.8 656.0 526.0C654.9 527.2 652.8 528.3 651.0 528.5C649.2 528.7 646.9 527.9 645.5 527.0C644.1 526.1 643.0 523.7 642.5 523.0" stroke-width="2.2"/>
<path d="M652.0 517.5C652.4 518.1 654.3 519.8 654.5 521.0C654.7 522.2 653.2 523.9 653.0 524.5" stroke-width="1.4"/>
<path d="M655.5 479.5C656.3 480.2 659.0 481.9 660.5 484.0C662.0 486.1 663.5 489.2 664.5 492.0C665.5 494.8 666.4 497.8 666.5 501.0C666.6 504.2 664.9 507.8 665.0 511.0C665.1 514.2 666.0 517.0 667.0 520.0C668.0 523.0 670.3 527.5 671.0 529.0" stroke-width="2.2"/>
<path d="M666.5 497.0C666.6 495.9 667.0 492.4 667.0 490.5C667.0 488.6 666.1 486.2 666.5 485.5C666.9 484.8 668.8 485.5 669.5 486.0C670.2 486.5 670.2 488.4 671.0 488.5C671.8 488.6 672.9 486.2 674.0 486.5C675.1 486.8 677.0 488.8 677.5 490.0C678.0 491.2 677.7 492.4 677.0 494.0C676.3 495.6 674.5 498.2 673.5 499.5C672.5 500.8 671.9 501.9 671.0 502.0C670.1 502.1 668.5 500.3 668.0 500.0" stroke-width="2.2"/>
<path d="M636.7 527.8C638.9 528.2 646.1 530.0 650.0 530.5C653.9 531.0 656.5 531.2 660.0 531.0C663.5 530.8 669.2 529.3 671.0 529.0" stroke-width="2.2"/>
<path d="M647.0 530.5C647.2 531.6 647.8 535.9 648.0 537.0" stroke-width="2.2"/>
<path d="M667.0 530.0C667.5 531.2 669.5 535.8 670.0 537.0" stroke-width="2.2"/>
<path d="M722.2 473.9C722.4 473.3 723.4 471.6 723.3 470.5C723.2 469.4 723.0 467.8 721.7 467.2C720.4 466.6 716.6 467.0 715.6 466.7C714.6 466.4 714.8 465.9 715.8 465.3C716.8 464.7 720.1 464.2 721.7 462.8C723.3 461.4 723.8 458.7 725.5 457.2C727.2 455.7 729.8 454.3 731.7 453.9C733.7 453.5 735.8 454.0 737.2 455.0C738.6 456.0 739.6 458.1 740.0 460.0C740.4 461.9 739.9 464.8 739.4 466.7C738.9 468.6 738.2 470.8 736.7 471.7C735.2 472.6 731.7 471.4 730.5 472.2C729.3 473.0 729.6 475.9 729.4 476.7" stroke-width="2.2"/>
<path d="M723.3 465.0C724.0 464.1 726.2 460.4 727.8 459.4C729.4 458.4 731.2 458.7 733.0 458.8C734.8 458.9 737.4 459.8 738.3 460.0" stroke-width="2.2"/>
<path d="M722.2 473.9C720.8 474.4 716.6 475.1 713.9 476.7C711.2 478.3 708.6 481.1 706.0 483.3C703.4 485.5 700.2 487.4 698.3 490.0C696.4 492.6 694.9 495.8 694.4 498.9C693.9 502.0 694.4 505.6 695.0 508.9C695.6 512.2 697.5 516.7 697.8 518.9C698.1 521.1 697.5 520.9 696.7 522.2C695.9 523.5 693.4 525.2 692.8 526.7C692.2 528.2 692.8 529.7 693.3 531.0C693.8 532.3 695.5 533.8 696.0 534.4" stroke-width="2.2"/>
<path d="M708.9 482.8C708.5 484.6 707.2 490.1 706.7 493.3C706.2 496.5 706.4 499.0 706.0 502.2C705.6 505.4 705.0 508.9 704.4 512.2C703.8 515.5 703.0 518.9 702.2 522.2C701.4 525.5 699.9 530.5 699.4 532.2" stroke-width="2.2"/>
<path d="M706.0 500.0C705.3 501.1 702.7 504.1 701.7 506.7C700.7 509.3 700.2 513.1 700.0 515.5C699.8 517.9 700.4 520.1 700.5 521.0" stroke-width="1.8"/>
<path d="M723.3 478.9C722.2 480.2 718.2 483.7 716.7 486.7C715.2 489.7 714.4 493.6 714.4 496.7C714.4 499.8 715.3 502.7 716.7 505.5C718.1 508.3 720.7 512.1 722.8 513.3C724.9 514.5 728.3 512.9 729.4 512.8" stroke-width="2.2"/>
<path d="M723.3 478.9C723.9 478.5 726.0 476.7 727.0 476.5C728.0 476.3 728.6 476.7 729.4 477.8C730.2 478.9 731.0 481.1 731.7 483.3C732.5 485.5 733.6 488.2 733.9 491.0C734.2 493.8 733.6 497.8 733.3 500.0C733.0 502.2 732.4 503.7 732.2 504.4" stroke-width="2.2"/>
<path d="M731.0 484.4C731.0 486.2 731.4 492.2 731.2 495.5C731.0 498.8 730.2 502.9 730.0 504.4" stroke-width="1.4"/>
<path d="M717.2 504.4 L730.5 502.8" stroke-width="1.8"/>
<path d="M723.3 512.8 L731.0 505.5" stroke-width="1.8"/>
<path d="M732.2 504.4C733.6 504.7 738.1 505.6 740.5 506.0C742.9 506.4 745.7 506.6 746.7 506.7" stroke-width="2.2"/>
<path d="M729.4 512.8C730.7 512.5 734.4 511.6 737.2 511.0C740.0 510.4 744.5 509.2 746.0 508.9" stroke-width="2.2"/>
<path d="M747.2 505.5C747.5 504.2 749.4 503.0 750.5 502.2C751.6 501.4 753.0 500.3 753.9 500.5C754.8 500.7 755.1 503.0 756.0 503.3C756.9 503.6 758.4 501.8 759.4 502.2C760.4 502.6 761.7 504.3 761.7 505.5C761.7 506.7 760.7 508.4 759.4 509.4C758.1 510.4 755.6 511.6 753.9 511.7C752.1 511.8 750.0 511.0 748.9 510.0C747.8 509.0 746.9 506.8 747.2 505.5Z" stroke-width="2.2"/>
<path d="M751.0 504.4C751.5 504.6 752.9 505.8 753.9 505.8C754.9 505.8 756.7 504.6 757.2 504.4" stroke-width="1.6"/>
<path d="M730.0 515.5C729.6 516.6 728.3 520.2 727.8 522.2C727.3 524.2 726.9 526.1 727.2 527.8C727.5 529.5 729.0 531.5 729.4 532.2" stroke-width="2.2"/>
<path d="M714.4 460.5C714.9 460.6 716.2 461.8 717.2 461.0C718.2 460.2 719.0 457.2 720.5 455.5C722.0 453.8 724.0 451.9 726.0 451.0C728.0 450.1 730.4 449.6 732.8 449.8C735.2 450.0 738.6 450.5 740.5 452.2C742.4 453.9 743.6 457.2 744.0 460.0C744.4 462.8 743.6 466.6 742.8 469.0C742.0 471.4 740.8 473.1 739.4 474.4C738.0 475.7 735.3 475.8 734.4 476.7C733.5 477.6 733.4 478.3 734.0 480.0C734.6 481.7 736.8 484.1 737.8 486.7C738.8 489.3 739.5 493.2 740.0 495.5C740.5 497.8 739.7 499.9 740.5 500.5C741.3 501.1 743.3 500.1 745.0 499.4C746.7 498.6 748.5 496.6 750.5 496.0C752.5 495.4 755.0 494.8 757.2 495.5C759.4 496.2 762.4 498.6 763.9 500.5C765.4 502.4 766.2 504.6 766.0 506.7C765.8 508.8 764.8 511.6 762.8 513.3C760.8 515.0 756.9 516.3 753.9 516.7C750.9 517.1 747.9 515.3 745.0 515.5C742.1 515.7 738.1 517.4 736.7 517.8" stroke-width="1.8"/>
<path d="M736.7 517.8 L736.3 527.8 L775.5 522.5" stroke-width="1.8" stroke-linejoin="miter"/>
<path d="M472.0 489.5 L508.5 507.5" stroke-width="1.5"/>
<path d="M541.0 571.0C540.7 572.5 539.1 577.0 539.4 580.0C539.7 583.0 541.6 586.0 543.0 589.0C544.4 592.0 547.0 596.3 547.8 597.8" stroke-width="2.2"/>
<path d="M551.7 571.0 L551.7 599.0" stroke-width="2.2"/>
<path d="M548.0 599.5C547.2 600.5 547.3 603.2 547.5 605.0C547.7 606.8 547.9 609.1 549.0 610.0C550.1 610.9 552.2 610.6 554.0 610.5C555.8 610.4 558.2 610.2 560.0 609.5C561.8 608.8 563.7 607.8 565.0 606.5C566.3 605.2 568.0 602.8 567.8 602.0C567.6 601.2 565.5 601.8 564.0 602.0C562.5 602.2 560.5 603.1 559.0 603.0C557.5 602.9 556.2 602.2 555.0 601.5C553.8 600.8 553.2 599.3 552.0 599.0C550.8 598.7 548.8 598.5 548.0 599.5Z" stroke-width="2.2"/>
<path d="M554.4 572.0C554.7 573.3 555.4 577.8 556.0 580.0C556.6 582.2 556.8 584.4 557.8 585.5C558.8 586.6 561.0 587.4 561.7 586.7C562.4 586.0 561.7 583.4 562.0 581.5C562.3 579.6 563.0 576.9 563.3 575.5C563.6 574.1 563.9 573.4 564.0 573.0" stroke-width="2.2"/>
<path d="M512.0 567.5C512.8 567.9 515.5 569.2 516.7 570.0C517.9 570.8 518.1 572.0 519.0 572.5C519.9 573.0 520.7 573.1 522.0 572.8C523.3 572.5 525.9 570.9 526.7 570.5" stroke-width="2.2"/>
<path d="M470.0 559.0C471.2 559.6 474.2 561.4 477.5 562.5C480.8 563.6 484.2 564.2 490.0 565.5C495.8 566.8 508.3 569.7 512.0 570.5" stroke-width="1.2"/>
<path d="M526.7 570.5C527.9 571.2 531.8 573.4 534.0 574.5C536.2 575.6 539.0 576.6 540.0 577.0" stroke-width="1.2"/>
<path d="M597.8 574.0C597.5 575.3 596.6 579.6 596.0 582.0C595.4 584.4 594.5 586.6 594.0 588.5C593.5 590.4 593.4 592.7 593.3 593.5" stroke-width="2.2"/>
<path d="M604.4 574.0C604.0 575.2 602.8 578.9 602.0 581.0C601.2 583.1 600.4 585.1 599.5 586.5C598.6 587.9 597.0 589.0 596.5 589.5" stroke-width="2.2"/>
<path d="M584.4 593.3C583.8 594.2 581.7 596.7 581.0 599.0C580.3 601.3 579.9 604.3 580.0 607.0C580.1 609.7 580.8 612.7 581.5 615.0C582.2 617.3 583.3 620.2 584.4 621.0C585.5 621.8 587.1 620.8 588.0 619.5C588.9 618.2 589.2 615.3 589.5 613.0C589.8 610.7 589.7 607.7 590.0 605.5C590.3 603.3 591.1 601.6 591.5 600.0C591.9 598.4 592.3 596.7 592.5 596.0" stroke-width="2.2"/>
<path d="M584.4 593.3 L592.5 596.0" stroke-width="2.2"/>
<path d="M592.2 601.0C593.5 600.3 596.9 598.3 600.0 597.0C603.1 595.7 607.5 594.4 611.0 593.3C614.5 592.2 617.7 591.3 621.0 590.5C624.3 589.7 628.5 588.7 631.0 588.3C633.5 587.9 634.7 588.5 636.0 588.0C637.3 587.5 637.9 586.8 638.9 585.5C639.9 584.2 641.2 580.9 641.7 580.0" stroke-width="2.2"/>
<path d="M593.3 594.4C594.9 593.0 600.2 588.1 603.0 586.0C605.8 583.9 607.7 582.7 610.0 581.5C612.3 580.3 614.7 579.4 616.7 578.9C618.7 578.4 620.1 578.8 622.0 578.5C623.9 578.2 626.3 577.8 627.8 577.2C629.3 576.6 630.5 575.4 631.0 575.0" stroke-width="2.2"/>
<path d="M642.0 579.4C642.2 580.8 642.4 585.1 643.0 588.0C643.6 590.9 644.7 594.5 645.5 596.7C646.3 599.0 647.1 600.3 648.0 601.5C648.9 602.7 649.9 603.6 651.0 603.9C652.1 604.2 653.5 604.0 654.5 603.5C655.5 603.0 656.7 602.2 656.7 601.0C656.7 599.8 654.9 597.8 654.5 596.0C654.1 594.2 654.1 591.7 654.4 590.0C654.6 588.3 655.4 587.2 656.0 586.0C656.6 584.8 657.5 583.5 657.8 583.0" stroke-width="2.2"/>
<path d="M653.3 584.0C653.1 583.6 651.5 582.7 652.0 581.7C652.5 580.7 654.5 579.2 656.0 578.0C657.5 576.8 659.2 575.5 661.0 574.5C662.8 573.5 665.8 572.2 666.7 571.7" stroke-width="2.2"/>
<path d="M653.3 584.0C654.4 583.4 657.7 581.4 660.0 580.5C662.3 579.6 665.0 579.1 667.0 578.5C669.0 577.9 671.2 577.2 672.0 577.0" stroke-width="2.2"/>
<path d="M683.0 567.0C683.2 568.3 683.6 572.5 684.0 575.0C684.4 577.5 684.7 579.2 685.5 581.7C686.3 584.2 687.8 587.5 689.0 590.0C690.2 592.5 691.4 594.2 693.0 597.0C694.6 599.8 696.6 603.7 698.5 607.0C700.4 610.3 703.4 615.3 704.4 617.0" stroke-width="2.2"/>
<path d="M669.0 571.7C669.7 572.4 671.7 574.3 673.0 576.0C674.3 577.7 676.0 579.7 676.7 581.7C677.4 583.7 676.8 586.0 677.0 588.0C677.2 590.0 677.0 591.8 677.8 594.0C678.6 596.2 680.1 598.8 682.0 601.0C683.9 603.2 686.9 604.8 689.0 607.0C691.1 609.2 692.7 611.4 694.5 614.0C696.3 616.6 699.1 621.3 700.0 622.8" stroke-width="2.2"/>
<path d="M686.7 575.0C687.6 575.1 690.1 575.9 692.0 575.5C693.9 575.1 695.8 574.2 698.0 572.5C700.2 570.8 704.2 566.7 705.5 565.5" stroke-width="2.2"/>
<path d="M700.5 622.0C700.3 622.8 702.6 625.9 704.0 627.5C705.4 629.1 707.4 631.7 709.0 631.7C710.6 631.7 712.0 629.0 713.5 627.5C715.0 626.0 716.3 624.1 717.8 622.8C719.3 621.5 721.2 620.6 722.5 619.5C723.8 618.4 724.8 617.3 725.5 616.0C726.2 614.7 726.9 612.6 727.0 611.5C727.1 610.4 726.9 609.3 726.0 609.4C725.1 609.5 723.0 611.4 721.5 612.0C720.0 612.6 718.3 612.5 716.7 612.8C715.1 613.0 713.5 613.0 712.0 613.5C710.5 614.0 708.9 615.0 707.8 616.0C706.7 617.0 706.0 618.4 705.5 619.5C705.0 620.6 705.8 622.4 705.0 622.8C704.2 623.2 700.7 621.2 700.5 622.0Z" stroke-width="2"/>
<path d="M692.0 617.8C692.3 618.6 693.0 621.0 694.0 622.5C695.0 624.0 696.3 625.3 697.8 627.0C699.3 628.7 701.1 630.8 703.0 632.5C704.9 634.2 707.4 636.5 709.0 637.0C710.6 637.5 711.4 636.2 712.5 635.5C713.6 634.8 714.1 634.4 715.5 632.8C716.9 631.2 719.0 628.0 721.0 626.0C723.0 624.0 726.1 622.2 727.8 620.5C729.5 618.8 730.5 616.8 731.0 616.0" stroke-width="1.4"/>
<path d="M731.0 616.0 L747.8 616.7" stroke-width="1.4"/>
<path d="M734.4 560.5C735.2 561.2 738.7 563.1 739.0 565.0C739.3 566.9 736.8 569.8 736.0 572.0C735.2 574.2 734.6 576.1 734.4 578.3C734.2 580.5 734.6 582.8 735.0 585.0C735.4 587.2 736.4 589.1 736.7 591.7C737.0 594.3 736.7 599.0 736.7 600.5" stroke-width="2.2"/>
<path d="M751.0 557.0C751.0 558.3 751.2 562.4 751.0 565.0C750.8 567.6 750.7 570.1 750.0 572.8C749.3 575.5 748.1 578.2 747.0 581.0C745.9 583.8 744.1 586.5 743.3 589.4C742.5 592.3 742.4 596.8 742.2 598.3" stroke-width="2.2"/>
<path d="M732.2 600.5C731.5 601.1 731.1 603.4 731.0 605.0C730.9 606.6 730.0 609.0 731.5 610.0C733.0 611.0 736.9 610.7 740.0 611.0C743.1 611.3 747.4 611.6 750.0 611.7C752.6 611.8 754.0 612.2 755.5 611.7C757.0 611.2 758.9 609.8 759.0 609.0C759.1 608.2 757.3 607.5 756.0 607.0C754.7 606.5 752.5 606.7 751.0 606.0C749.5 605.3 748.3 604.1 747.0 603.0C745.7 601.9 744.3 599.6 743.3 599.4C742.3 599.1 741.9 600.9 741.0 601.5C740.1 602.1 739.0 602.8 738.0 602.8C737.0 602.8 736.0 601.9 735.0 601.5C734.0 601.1 732.9 599.9 732.2 600.5Z" stroke-width="2.2"/>
<path d="M753.3 557.8C753.5 559.0 754.2 562.5 754.4 565.0C754.6 567.5 755.0 569.8 754.4 572.8C753.8 575.8 752.3 579.5 751.0 583.0C749.7 586.5 747.0 591.3 746.7 593.9C746.4 596.5 748.1 597.2 749.0 598.5C749.9 599.8 750.7 601.0 752.2 601.7C753.7 602.4 756.9 602.6 757.8 602.8" stroke-width="1.4"/>
<path d="M755.5 559.5 L774.4 555.5" stroke-width="1.4"/>
<path d="M443.3 474.0C445.4 475.8 451.7 481.2 456.0 484.5C460.3 487.8 463.2 490.2 469.0 494.0C474.8 497.8 485.8 504.7 491.0 507.5C496.2 510.3 496.3 509.7 500.0 511.0C503.7 512.3 507.4 513.6 513.3 515.5C519.2 517.4 529.9 520.9 535.5 522.5C541.1 524.1 541.9 523.9 546.7 525.0C551.5 526.1 557.4 527.7 564.4 529.3C571.4 530.9 581.2 533.1 589.0 534.4C596.8 535.7 603.7 536.4 611.0 537.0C618.3 537.6 624.8 538.0 633.0 538.3C641.2 538.6 648.8 539.4 660.0 539.0C671.2 538.6 687.5 537.2 700.0 536.0C712.5 534.8 725.0 533.2 735.0 532.0C745.0 530.8 752.2 530.1 760.0 529.0C767.8 527.9 774.6 526.9 782.0 525.5C789.4 524.1 797.7 522.4 804.4 520.5C811.1 518.6 818.1 516.1 822.0 514.0C825.9 511.9 827.8 510.0 827.8 507.8C827.8 505.6 825.0 503.0 822.0 501.0C819.0 499.0 814.0 497.1 810.0 496.0C806.0 494.9 800.2 494.7 798.3 494.4L796 482.8C799.2 483.6 808.9 485.6 815.5 487.8C822.1 490.0 829.9 492.9 835.5 496.0C841.1 499.1 846.1 503.6 849.0 506.7C851.9 509.8 853.0 511.4 852.8 514.4C852.6 517.4 851.3 521.1 847.8 524.4C844.3 527.7 839.2 531.2 832.0 534.4C824.8 537.5 812.7 540.9 804.4 543.3C796.1 545.7 789.4 547.3 782.0 548.9C774.6 550.5 768.8 551.2 760.0 553.0C751.2 554.8 741.6 557.1 729.0 559.4C716.4 561.6 695.9 564.9 684.4 566.5C672.9 568.1 668.5 568.0 660.0 569.0C651.5 570.0 641.5 571.5 633.3 572.2C625.1 573.0 618.4 573.2 611.0 573.5C603.6 573.8 597.9 574.2 589.0 573.9C580.1 573.6 565.2 572.3 557.8 571.8C550.4 571.3 551.9 572.0 544.4 571.0C536.9 570.0 520.4 566.8 513.0 565.5C505.6 564.2 507.3 564.9 500.0 563.0C492.7 561.1 479.0 557.9 469.0 554.4C459.0 550.9 444.8 544.1 440.0 542.0Z" fill="#fff" stroke-width="2.3"/>
<path d="M411.9 444.9 L443.0 473.7 L440.0 539.5 L400.2 494.6 L424.3 489.2Z" fill="#fff" stroke-width="2.3" stroke-linejoin="miter"/>
<path d="M443.5 474 L446.9 482 L446.5 543" stroke-width="2"/>
<path d="M442.5 469.5 L415 441.5 Q411.5 438.3 408.8 440.8 Q407.2 442.5 408 445.5 L417.3 486.1 L399.5 490.5 Q395.4 491.8 395.2 494.5 Q395.3 496.5 397.9 499 L435.2 538.2 L436 541.8 L440.7 545.5" stroke-width="1.5"/>
<path d="M795.5 477.8C798.8 478.6 808.5 480.4 815.5 482.8C822.5 485.2 831.7 488.8 837.8 492.2C843.9 495.6 848.9 499.6 852.2 503.3C855.5 507.0 857.5 510.7 857.5 514.4C857.5 518.1 855.5 522.0 852.2 525.5C848.9 529.0 843.9 532.4 837.8 535.5C831.7 538.6 821.5 542.2 815.5 544.4C809.5 546.6 804.0 548.1 801.7 548.9" stroke-width="1.5"/>
<path d="M800.0 499.4C802.0 499.9 808.4 500.9 812.2 502.2C816.0 503.5 821.0 506.4 822.8 507.2L812 512.8L802 517.2Z" stroke-width="1.6"/>
</svg>
<!-- BOTTOM PANELS -->
<div class="panel" style="left:-1px;top:817px;width:185px;height:41px;border-radius:0 10px 10px 0"></div>
<div class="panel" style="left:192px;top:817px;width:165px;height:41px;border-radius:10px"></div>
<div style="left:15px;top:828px;width:20px;height:20px;background:#000"></div>
<div style="left:49px;top:828px;width:20px;height:20px;background:#ff0000"></div>
<div style="left:83px;top:828px;width:20px;height:20px;background:#ffa90f"></div>
<div style="left:118px;top:828px;width:20px;height:20px;background:#4b80f3"></div>
<div style="left:152px;top:828px;width:20px;height:20px;background:linear-gradient(180deg,#38b4ec 0%,#8f83ea 45%,#f2556e 80%,#ff4a4f 100%)"></div>
<svg style="left:199px;top:825.5px" width="24" height="24" viewBox="0 0 24 24" fill="none" stroke="#0a7fcb" stroke-width="2" stroke-linejoin="round" stroke-linecap="round"><rect x="5" y="6.500" width="14" height="11" stroke-width="2.4" stroke-linejoin="miter"/><path d="M2.500 6.500 V4 H6 M18 4 H21.500 V6.500 M21.500 17.500 V20 H18 M6 20 H2.500 V17.500" stroke-width="1.600"/></svg>
<svg style="left:242px;top:825.5px" width="24" height="24" viewBox="0 0 24 24" fill="none" stroke="#0a7fcb" stroke-width="2" stroke-linejoin="round" stroke-linecap="round"><path d="M2.500 7 V3.500 H6 M18 3.500 H21.500 V7 M21.500 17 V20.500 H18 M6 20.500 H2.500 V17" stroke-width="1.700"/><rect x="6.500" y="6" width="6.500" height="4.500" fill="#0a7fcb" stroke="none"/><path d="M17 5.500 L20 10.500 H14 Z" fill="#0a7fcb" stroke="none"/><ellipse cx="11.500" cy="15.800" rx="4" ry="2.700" fill="#0a7fcb" stroke="none"/></svg>
<svg style="left:284.5px;top:825.5px" width="24" height="24" viewBox="0 0 24 24" fill="none" stroke="#0a7fcb" stroke-width="2" stroke-linejoin="round" stroke-linecap="round"><g transform="rotate(45 12 12)"><path d="M6.500 17 V10.500 A5.500 5.500 0 0 1 17.500 10.500 V17" stroke-width="4.600" stroke-linecap="butt"/></g><path d="M8 15 L5 18.800 H8.200 L6.500 22.500" stroke-width="1.500" stroke="#0a7fcb"/><path d="M3.300 13.300 L8.600 18.600" stroke="#fff" stroke-width="1.300"/></svg>
<svg style="left:326.5px;top:825.5px" width="24" height="24" viewBox="0 0 24 24" fill="none" stroke="#0a7fcb" stroke-width="2" stroke-linejoin="round" stroke-linecap="round"><rect x="3" y="3" width="18" height="18" rx="1.500" fill="#0a7fcb" stroke="none"/><rect x="4.8" y="4.8" width="4" height="4" fill="#fff" stroke="none"/><rect x="4.8" y="10.0" width="4" height="4" fill="#fff" stroke="none"/><rect x="4.8" y="15.2" width="4" height="4" fill="#fff" stroke="none"/><rect x="10.0" y="4.8" width="4" height="4" fill="#fff" stroke="none"/><rect x="10.0" y="10.0" width="4" height="4" fill="#fff" stroke="none"/><rect x="10.0" y="15.2" width="4" height="4" fill="#fff" stroke="none"/><rect x="15.2" y="4.8" width="4" height="4" fill="#fff" stroke="none"/><rect x="15.2" y="10.0" width="4" height="4" fill="#fff" stroke="none"/><rect x="15.2" y="15.2" width="4" height="4" fill="#fff" stroke="none"/></svg>
<!-- RIGHT PANEL 1 -->
<div class="panel" style="left:1368px;top:40px;width:232px;height:399px;border-radius:8px 0 0 8px;border:1px solid #e6e6e6;border-right:0"></div>
<svg style="left:1420px;top:45.5px" width="28" height="26" viewBox="0 0 28 24" fill="none" stroke="#0a7fcb" stroke-width="1.8" stroke-linejoin="round" stroke-linecap="round"><rect x="5" y="3.5" width="18" height="13.5" rx="1.5"/><path d="M7.5 13.5 L11.5 9.5 L14 12 L20.5 6"/><circle cx="9.2" cy="7.3" r="0.9" fill="#0a7fcb" stroke="none"/></svg>
<div style="left:1417px;top:68px;width:34px;height:2px;background:#0a7fcb"></div>
<svg style="left:1511.5px;top:44.5px" width="27" height="24.500" viewBox="0 0 24 22" fill="none" stroke="#8a8a8a" stroke-width="1.8" stroke-linejoin="round"><path d="M3 6.5 H7 L8.5 3.5 H15.5 L17 6.5 H21 V18.500 H3 Z"/><circle cx="12" cy="12" r="2.2"/></svg>
<div class="dd" style="left:1372px;top:86px;width:85px">1.基础图案<i></i></div>
<div class="dd" style="left:1461px;top:86px;width:93px">1.基本图形<i></i></div>
<svg style="left:1566px;top:88px" width="18" height="18" viewBox="0 0 18 18" fill="none" stroke="#9a9a9a" stroke-width="2" stroke-linecap="round"><circle cx="8" cy="8" r="5.2"/><path d="M12 12 L15.5 15.5"/></svg>
<div style="left:1590px;top:114px;width:3px;height:141px;background:#d2d2d2;border-radius:1px"></div>
<svg style="left:1370px;top:110px" width="230" height="328" viewBox="1370 110 230 328" fill="none" stroke="#3c3c3c" stroke-width="1" stroke-linejoin="miter">
<path d="M1380.5 129.5 H1408.5 V116.8 L1435 143.3 L1408.5 170 V156.800 H1380.5 Z"/>
<path d="M1451.5 129.5 H1491.7 L1506 143.2 L1491.7 156.8 H1451.5 Z"/>
<path d="M1523 126.8 H1563.4 L1576.8 143.2 L1563.4 159.7 H1523 L1536.3 143.2 Z"/>
<circle cx="1408" cy="221.7" r="27.2"/><circle cx="1408" cy="221.7" r="16"/>
<path d="M1465 195.3 H1493 V208.8 H1506.5 V236 H1493 V249.3 H1465 V236 H1451.8 V208.8 H1465 Z"/>
<path d="M1550 195.0 L1560.5 205.5 H1554.2 V218.0 H1566.7 V211.7 L1577.2 222.2 L1566.7 232.7 V226.39999999999998 H1554.2 V238.89999999999998 H1560.5 L1550 249.39999999999998 L1539.5 238.89999999999998 H1545.8 V226.39999999999998 H1533.3 V232.7 L1522.8 222.2 L1533.3 211.7 V218.0 H1545.8 V205.5 H1539.5 Z"/>
<path d="M1381 301.7 L1391.7 290.9 V296.8 H1424.3 V290.9 L1435.4 301.7 L1424.3 312.6 V307 H1391.7 V312.6 Z"/>
<polygon points="1479.0,276.0 1485.3,295.5 1505.8,295.5 1489.3,307.5 1495.6,327.0 1479.0,315.0 1462.4,327.0 1468.7,307.5 1452.2,295.5 1472.7,295.5"/>
<path stroke="#666" d="M1550.2 326.3 L1529.5 305.5 C1518.500 294 1523.500 276 1537.500 276 C1544.500 276 1548.500 279.500 1550.2 282 C1552 279.500 1556 276 1563 276 C1577 276 1582 294 1571 305.500 Z"/>
<path d="M1408.9 380.3 L1409.2 380.3 L1409.6 380.5 L1409.9 380.7 L1410.2 381.1 L1410.4 381.5 L1410.6 382.0 L1410.6 382.5 L1410.5 383.0 L1410.3 383.6 L1410.0 384.2 L1409.6 384.7 L1409.0 385.1 L1408.4 385.4 L1407.6 385.6 L1406.8 385.6 L1406.0 385.5 L1405.2 385.2 L1404.4 384.7 L1403.7 384.1 L1403.1 383.3 L1402.7 382.4 L1402.4 381.4 L1402.4 380.4 L1402.5 379.3 L1402.9 378.2 L1403.4 377.2 L1404.2 376.3 L1405.2 375.5 L1406.3 374.9 L1407.5 374.5 L1408.9 374.3 L1410.2 374.4 L1411.6 374.8 L1412.9 375.5 L1414.0 376.3 L1415.1 377.5 L1415.9 378.8 L1416.4 380.2 L1416.7 381.8 L1416.6 383.5 L1416.3 385.1 L1415.6 386.7 L1414.7 388.1 L1413.4 389.4 L1411.9 390.5 L1410.3 391.2 L1408.4 391.7 L1406.5 391.7 L1404.6 391.5 L1402.7 390.8 L1401.0 389.8 L1399.4 388.5 L1398.1 386.9 L1397.1 385.0 L1396.5 382.9 L1396.2 380.8 L1396.4 378.5 L1396.9 376.4 L1397.9 374.3 L1399.3 372.4 L1401.1 370.8 L1403.1 369.5 L1405.3 368.7 L1407.8 368.2 L1410.3 368.2 L1412.7 368.7 L1415.1 369.6 L1417.3 371.0 L1419.3 372.8 L1420.8 375.0 L1422.0 377.4 L1422.7 380.0 L1422.9 382.8 L1422.6 385.6 L1421.7 388.3 L1420.4 390.8 L1418.6 393.1 L1416.3 395.0 L1413.7 396.5 L1410.9 397.5 L1407.9 397.9 L1404.8 397.8 L1401.8 397.1 L1398.9 395.8 L1396.3 394.0 L1394.0 391.8 L1392.2 389.1 L1390.9 386.1 L1390.1 382.8 L1390.0 379.5 L1390.5 376.1 L1391.7 372.9 L1393.4 369.9 L1395.7 367.3 L1398.4 365.1 L1401.6 363.4 L1405.0 362.4 L1408.6 361.9 L1412.3 362.2 L1415.8 363.2 L1419.2 364.8 L1422.2 367.0 L1424.8 369.8 L1426.9 373.0 L1428.3 376.6 L1429.0 380.5 L1429.0 384.4 L1428.3 388.3 L1426.8 392.0 L1424.7 395.5 L1422.0 398.4 L1418.7 400.9 L1414.9 402.7 L1410.9 403.8 L1406.7 404.2 L1402.5 403.7 L1398.4 402.5 L1394.6 400.5 L1391.2 397.8 L1388.3 394.5 L1386.1 390.7 L1384.5 386.5 L1383.8 382.1 L1384.0 377.6 L1384.9 373.1 L1386.7 368.9 L1389.3 365.1 L1392.5 361.7 L1396.4 359.1 L1400.7 357.1 L1405.3 356.0 L1410.1 355.8 L1414.9 356.4 L1419.5 358.0 L1423.7 360.3 L1427.5 363.5 L1430.7 367.3 L1433.1 371.7 L1434.6 376.5 L1435.3 381.5" stroke-width="0.9"/>
<polygon points="1479.0,354.0 1485.8,369.3 1502.4,367.5 1492.5,381.0 1502.4,394.5 1485.8,392.7 1479.0,408.0 1472.2,392.7 1455.6,394.5 1465.5,381.0 1455.6,367.5 1472.2,369.3"/>
<path d="M1541.4 357 H1578 L1559 404.2 H1522.5 Z"/>
<path d="M1397 434.5 Q1408 430.5 1419 434.5" stroke="#666"/>
<path d="M1546.5 434.5 L1550 432.3 L1553.5 434.5" stroke="#666"/>
</svg>
<div class="slab" style="left:1368px;top:177px">箭头</div>
<div class="slab" style="left:1439px;top:177px">箭头1</div>
<div class="slab" style="left:1510px;top:177px">箭头2</div>
<div class="slab" style="left:1368px;top:256px">同心圆</div>
<div class="slab" style="left:1439px;top:256px">十字</div>
<div class="slab" style="left:1510px;top:256px">十字箭头</div>
<div class="slab" style="left:1368px;top:335px">双箭头</div>
<div class="slab" style="left:1439px;top:335px">五角星</div>
<div class="slab" style="left:1510px;top:335px">心形</div>
<div class="slab" style="left:1368px;top:414px">螺旋线</div>
<div class="slab" style="left:1439px;top:414px">六角星</div>
<div class="slab" style="left:1510px;top:414px">平行四边形</div>
<div style="left:1578px;top:317px;width:22px;height:35px;background:#3d3d3d;border-radius:3px 0 0 3px"></div>
<svg style="left:1582px;top:322px" width="16" height="24" viewBox="0 0 16 24" fill="none" stroke="#f5a21b" stroke-width="1.3" stroke-linejoin="round"><path d="M5.5 5 V2 H11.500 V5"/><path d="M3.5 5 H13.5 V17 Q13.5 21 8.5 21 Q3.5 21 3.5 17 Z"/><path d="M7 3.6 H8 M9.3 3.6 H10.3" stroke-width="0.9"/></svg>
<!-- RIGHT PANEL 2 -->
<div class="panel" style="left:1368px;top:449px;width:232px;height:407px;border-radius:8px 0 0 0;border:1px solid #e6e6e6;border-right:0;border-bottom:0"></div>
<div style="left:1376px;top:456px;width:218px;height:33px;background:#007fcb;border-radius:4px 4px 0 0"></div>
<div style="left:1376px;top:489px;width:218px;height:33px;background:#ebebeb"></div>
<div class="th" style="left:1363px;width:80px;top:466px">加工工艺</div>
<div class="th" style="left:1418px;width:80px;top:466px">速度</div>
<div class="th" style="left:1475px;width:80px;top:466px">功率</div>
<div class="th" style="left:1530px;width:80px;top:466px">输出</div>
<div style="left:1378px;top:498px;width:15px;height:15px;background:#000;border-radius:2px"></div>
<div class="td" style="left:1397px;top:499px;color:#111;font-size:12px;font-weight:500">切割</div>
<div class="td" style="left:1428px;width:60px;top:499px;color:#666;">15.0</div>
<div class="td" style="left:1485px;width:60px;top:499px;color:#666;">100.0</div>
<svg style="left:1560px;top:499px" width="22" height="14" viewBox="0 0 22 14" fill="none" stroke="#111" stroke-width="1.2"><path d="M1.5 7 Q11 -3.500 20.5 7 Q11 17.500 1.5 7 Z"/><circle cx="11" cy="7" r="3.4" stroke-width="1.7"/></svg>
<div style="left:1378px;top:531px;width:15px;height:15px;background:#4a0000;border-radius:2px"></div>
<div class="td" style="left:1397px;top:532px;color:#111;font-size:12px;font-weight:500">切割</div>
<div class="td" style="left:1428px;width:60px;top:532px;color:#000;-webkit-text-stroke:0.3px #000;">17.0</div>
<div class="td" style="left:1485px;width:60px;top:532px;color:#000;-webkit-text-stroke:0.3px #000;">100.0</div>
<svg style="left:1560px;top:532px" width="22" height="14" viewBox="0 0 22 14" fill="none" stroke="#111" stroke-width="1.2"><path d="M1.5 7 Q11 -3.500 20.5 7 Q11 17.500 1.5 7 Z"/><circle cx="11" cy="7" r="3.4" stroke-width="1.7"/></svg>
<div style="left:1426.7px;top:702px;width:106.6px;height:106.6px;border-radius:50%;background:#007fcb"></div>
<div style="left:1430.3px;top:705.6px;width:99.4px;height:99.4px;border-radius:50%;border:3.5px solid #fff"></div>
<div style="left:1440px;top:741px;width:80px;text-align:center;font-size:24px;line-height:30px;color:#fff;font-weight:500">开始</div>
<div style="left:1360px;top:787px;font-size:17.4px;line-height:22px;color:rgba(120,120,120,.55)">激活 Windows</div>
<div style="left:1360px;top:809px;font-size:13px;line-height:18px;color:rgba(120,120,120,.55)">转到“设置”以激活 Windows。</div>
<div style="left:1376px;top:824px;width:217px;height:25px;background:#e3e3e3;border-radius:3px"></div>
<div style="left:1378px;top:826px;width:158px;height:21px;background:#fff;border-radius:2px"></div>
<svg style="left:1430px;top:830px" width="14" height="14" viewBox="0 0 14 14" fill="none" stroke="#f08a24" stroke-width="1.2"><circle cx="7" cy="7" r="5.8"/><path d="M4.6 4.6 L9.4 9.4 M9.4 4.6 L4.6 9.4"/></svg>
<div style="left:1449px;top:829px;font-size:12px;line-height:16px;color:#f08a24;letter-spacing:0.3px">未连接</div>
<div style="left:1537px;top:829px;width:55px;text-align:center;font-size:12px;line-height:16px;color:#111;font-weight:500">切换</div>

<!-- IME BAR -->
<div style="left:1216px;top:840px;width:177px;height:26px;background:#f1f1f1"></div>
<div style="left:1220px;top:845px;width:1px;height:16px;background:#9a9a9a"></div><div style="left:1223px;top:845px;width:1px;height:16px;background:#9a9a9a"></div>
<div style="left:1232px;top:843px;width:20px;text-align:center;font-size:17px;line-height:22px;color:#111">中</div>
<svg style="left:1258px;top:843px" width="22" height="22" viewBox="0 0 22 22" fill="none" stroke="#111" stroke-width="1.3" stroke-linejoin="round"><path d="M9.500 3 Q16.500 5 16.500 11.500 Q16.500 18.500 8 19 Q4.500 19 3.500 17.500 Q12.500 17 12.500 9.500 Q12.500 5.500 9.500 3 Z"/></svg>
<div style="left:1286px;top:840px;width:20px;text-align:center;font-size:17px;line-height:22px;color:#111;font-weight:bold">°,</div>
<div style="left:1312px;top:843px;width:20px;text-align:center;font-size:17px;line-height:22px;color:#111">简</div>
<svg style="left:1339px;top:844px" width="20" height="20" viewBox="0 0 20 20" fill="none" stroke="#111" stroke-width="1.200" stroke-linecap="round"><circle cx="10" cy="10" r="8"/><path d="M6 12 Q10 16 14 12"/><circle cx="7.200" cy="7.500" r="0.900" fill="#111" stroke="none"/><circle cx="12.800" cy="7.500" r="0.900" fill="#111" stroke="none"/></svg>
<svg style="left:1365.500px;top:844px" width="20" height="20" viewBox="0 0 20 20" fill="none" stroke="#111" stroke-width="1.200" stroke-linejoin="round"><path d="M18.02 8.30 L18.02 11.70 L16.03 11.45 L15.29 13.24 L16.88 14.47 L14.47 16.88 L13.24 15.29 L11.45 16.03 L11.70 18.02 L8.30 18.02 L8.55 16.03 L6.76 15.29 L5.53 16.88 L3.12 14.47 L4.71 13.24 L3.97 11.45 L1.98 11.70 L1.98 8.30 L3.97 8.55 L4.71 6.76 L3.12 5.53 L5.53 3.12 L6.76 4.71 L8.55 3.97 L8.30 1.98 L11.70 1.98 L11.45 3.97 L13.24 4.71 L14.47 3.12 L16.88 5.53 L15.29 6.76 L16.03 8.55Z"/><circle cx="10" cy="10" r="2.900"/></svg>
<!-- TASKBAR -->
<div style="left:0;top:867px;width:1600px;height:33px;background:linear-gradient(90deg,#2d2320 280px,#2a2321 420px,#1e2529 700px,#1c2327 1600px)"></div>
<div style="left:0;top:867px;width:40px;height:33px;background:#1d1d1d"></div>
<div style="left:40px;top:867px;width:240px;height:34px;background:#f3f3f3;border-top:1px solid #dadada;margin-top:-1px"></div>
<svg style="left:13px;top:877px" width="14" height="14" viewBox="0 0 14 14" fill="#fff"><path d="M0 2 L5.800 1.200 V6.600 H0 Z M6.600 1.100 L14 0 V6.600 H6.600 Z M0 7.400 H5.800 V12.800 L0 12 Z M6.600 7.400 H14 V14 L6.600 12.900 Z"/></svg>
<svg style="left:49px;top:875px" width="18" height="18" viewBox="0 0 18 18" fill="none" stroke="#222" stroke-width="1.300" stroke-linecap="round"><circle cx="10.500" cy="7" r="4.300"/><path d="M7.300 10.200 L2 15.500"/></svg>
<div style="left:73px;top:877px;font-size:12px;line-height:16px;color:#222">搜索</div>
<svg style="left:212px;top:868px" width="68" height="32" viewBox="212 868 68 32"><defs><linearGradient id="hm" x1="0" y1="0" x2="1" y2="0"><stop offset="0" stop-color="#7f93a8"/><stop offset="0.3" stop-color="#a9cfa4"/><stop offset="0.6" stop-color="#6db43c"/><stop offset="1" stop-color="#79b552"/></linearGradient><linearGradient id="hd" x1="0" y1="0" x2="1" y2="0"><stop offset="0" stop-color="#7d8ca6"/><stop offset="0.35" stop-color="#a3b1c8"/><stop offset="0.7" stop-color="#8494ad"/><stop offset="1" stop-color="#66768f"/></linearGradient></defs><ellipse cx="260.500" cy="886" rx="5.800" ry="9" fill="#9aa8be"/><path d="M214 900 Q222 890.500 236 890 L262 890 Q274 893 280 900 Z" fill="url(#hm)"/><path d="M266 890.500 Q274 893 280 900 H266 Z" fill="#7e90a6"/><path d="M256 887.500 Q268 887.500 267.500 893 Q267 897 264.500 900" stroke="#b4bdc9" stroke-width="2.600" fill="none"/><path d="M228 894 Q226.500 870 241.500 870 Q256.500 870 255.700 894 Q241 897.500 228 894 Z" fill="url(#hd)"/><path d="M229.500 884 Q241 886 254.500 884 M231 878 Q241 880 253 878" stroke="#73839c" stroke-width="0.700" fill="none" opacity="0.700"/><rect x="239.400" y="885" width="4.500" height="10" fill="#2a2e48"/></svg>
<div style="left:569px;top:867px;width:40px;height:33px;background:#3b4347"></div>
<svg style="left:291.0px;top:873.0px" width="22" height="22" viewBox="0 0 22 22"><path d="M6.500 6 V4.500 Q6.500 2 9 2 H13 Q15.500 2 15.500 4.500 V6" fill="none" stroke="#2aa0e6" stroke-width="1.600"/><path d="M2 6 H20 V17.500 Q20 20 17.500 20 H4.500 Q2 20 2 17.500 Z" fill="#f4f4f4"/><rect x="7" y="9" width="3.600" height="3.600" fill="#f25022"/><rect x="11.400" y="9" width="3.600" height="3.600" fill="#7fba00"/><rect x="7" y="13.400" width="3.600" height="3.600" fill="#00a4ef"/><rect x="11.400" y="13.400" width="3.600" height="3.600" fill="#ffb900"/></svg>
<svg style="left:332.0px;top:873.0px" width="22" height="22" viewBox="0 0 22 22"><defs><linearGradient id="eg" x1="0" y1="0" x2="1" y2="1"><stop offset="0" stop-color="#35c1f1"/><stop offset="0.600" stop-color="#1b76d2"/><stop offset="1" stop-color="#0c59a4"/></linearGradient></defs><circle cx="11" cy="11" r="9.500" fill="url(#eg)"/><path d="M3 7.500 Q8 0.500 16 3 Q20.500 5 20.500 10 Q15 3.500 8.500 7 Q5 9 5.500 13.500 Q2.500 11 3 7.500 Z" fill="#49d668"/><path d="M8 12.500 Q8 8.500 12 8.500 Q15.500 8.500 16 11 Q16 13 13.500 13 Q14.500 15.500 18.500 14.500 Q16.500 18.500 12.500 17.500 Q8 16.500 8 12.500 Z" fill="#1d2b3a" opacity="0.850"/></svg>
<svg style="left:373.0px;top:873.0px" width="22" height="22" viewBox="0 0 22 22"><path d="M1.500 4 H8 L10 6 H20.500 V18 H1.500 Z" fill="#e8a917"/><path d="M1.500 8 H20.500 V18 H1.500 Z" fill="#ffd75e"/><path d="M6.500 13 H15.500 V18.500 H13 V15.500 H9 V18.500 H6.500 Z" fill="#3a8fd9"/></svg>
<svg style="left:414.0px;top:873.0px" width="22" height="22" viewBox="0 0 22 22"><rect x="2" y="2.500" width="18" height="17" rx="3" fill="#001e36"/><text x="11" y="15" text-anchor="middle" font-family="Liberation Sans, sans-serif" font-weight="bold" font-size="9.500" fill="#31a8ff">Ps</text></svg>
<svg style="left:455.0px;top:873.0px" width="22" height="22" viewBox="0 0 22 22"><rect x="2" y="2.500" width="18" height="17" rx="3" fill="#330000"/><text x="11" y="15" text-anchor="middle" font-family="Liberation Sans, sans-serif" font-weight="bold" font-size="9.500" fill="#ff9a00">Ai</text></svg>
<svg style="left:496.0px;top:873.0px" width="22" height="22" viewBox="0 0 22 22"><ellipse cx="9" cy="9" rx="7.500" ry="6.500" fill="#3fc45a"/><path d="M4.500 13.500 L3.500 17 L7.500 15 Z" fill="#3fc45a"/><ellipse cx="15" cy="14" rx="5.800" ry="4.800" fill="#ececec"/><path d="M18 17.500 L19.500 20 L15.500 18.500 Z" fill="#ececec"/><circle cx="6.500" cy="7.500" r="0.900" fill="#1d2b1d"/><circle cx="11.500" cy="7.500" r="0.900" fill="#1d2b1d"/></svg>
<svg style="left:537.0px;top:873.0px" width="22" height="22" viewBox="0 0 22 22"><rect x="1.500" y="1.500" width="19" height="19" rx="2.500" fill="#2aa7e0"/><path d="M8 5 H11 L8.500 14 H14 L13.400 16.200 H5 Z" fill="#fff"/><rect x="12.500" y="4.500" width="5.500" height="5.500" fill="#f2c230"/><path d="M13.700 5.500 V9 M16.800 5.500 V9 M13.700 7.250 H16.800" stroke="#2a6ea0" stroke-width="0.900" fill="none"/><rect x="4" y="17.300" width="14" height="1.400" fill="#bfe6f7" opacity="0.700"/></svg>
<svg style="left:578.0px;top:873.0px" width="22" height="22" viewBox="0 0 22 22"><rect x="1.500" y="1.500" width="19" height="19" rx="2.500" fill="#2aa7e0"/><path d="M8 5 H11 L8.500 14 H14 L13.400 16.200 H5 Z" fill="#fff"/><rect x="12.500" y="4.500" width="5.500" height="5.500" fill="#f2c230"/><path d="M13.700 5.500 V9 M16.800 5.500 V9 M13.700 7.250 H16.800" stroke="#2a6ea0" stroke-width="0.900" fill="none"/><rect x="4" y="17.300" width="14" height="1.400" fill="#bfe6f7" opacity="0.700"/></svg>
<div style="left:327.5px;top:898px;width:31.19999999999999px;height:2px;background:#76b9ed"></div>
<div style="left:367.5px;top:898px;width:32.5px;height:2px;background:#76b9ed"></div>
<div style="left:450px;top:898px;width:32.5px;height:2px;background:#76b9ed"></div>
<div style="left:490px;top:898px;width:31px;height:2px;background:#76b9ed"></div>
<div style="left:531px;top:898px;width:32.700000000000045px;height:2px;background:#76b9ed"></div>
<div style="left:568.7px;top:898px;width:40.0px;height:2px;background:#76b9ed"></div>
<svg style="left:1270px;top:873px" width="24" height="22" viewBox="0 0 24 22" fill="#3aaa1e" stroke="none"><rect x="2" y="13" width="2.600" height="8"/><rect x="6" y="15.500" width="2.600" height="5.500"/><rect x="10" y="17.500" width="2.600" height="3.500"/><rect x="14" y="19" width="2.600" height="2"/><rect x="18" y="19.500" width="2.600" height="1.500"/><path d="M2 2 Q9 4 15 11.500" fill="none" stroke="#3aaa1e" stroke-width="2"/><path d="M12.500 13.500 L20 13 L17 6" fill="none" stroke="#3aaa1e" stroke-width="2" stroke-linejoin="miter"/></svg>
<div class="tb" style="left:1298px;top:876px;font-size:12px">中证1000</div>
<div class="tb" style="left:1356px;top:876px;color:#1fc41f;font-size:12px">-1.75%</div>
<svg style="left:1414px;top:878px" width="14" height="12" viewBox="0 0 14 12" fill="none" stroke="#fff" stroke-width="1.300"><path d="M2 9 L7 3.500 L12 9"/></svg>
<svg style="left:1433px;top:876px" width="16" height="16" viewBox="0 0 16 16" fill="none" stroke="#fff" stroke-width="1.100"><path d="M4.500 2.500 H14.500 V10.500 H4.500 Z"/><path d="M1 1 H4.500 V8 H1 Z" fill="#1d2428"/><path d="M7 13.500 H12 M9.500 10.500 V13.500"/></svg>
<svg style="left:1456px;top:875px" width="17" height="18" viewBox="0 0 17 18" fill="none" stroke="#fff" stroke-width="1.200" stroke-linecap="round"><path d="M12 2.500 Q14.500 2 14.500 5 Q14 8 9 13 Q5 17 3 15 Q1.500 13 5 9.500 L10 4.500"/><path d="M7 12 Q11 9 15 9.500"/></svg>
<div class="tb" style="left:1478px;top:873px;font-size:14.500px;line-height:20px">英</div>
<div class="tb" style="left:1496px;top:869px;width:60px;text-align:center;font-size:10.500px;line-height:15px">13:48</div>
<div class="tb" style="left:1496px;top:885px;width:60px;text-align:center;font-size:11px;line-height:15px">2024/6/24</div>
<svg style="left:1565px;top:874px" width="24" height="24" viewBox="0 0 24 24"><path d="M2.500 2.500 H15.500 V13 H7 L2.500 16.500 Z" fill="#fff"/><path d="M5 5.500 H13 M5 8 H13 M5 10.500 H10" stroke="#1d2428" stroke-width="1"/><circle cx="14.500" cy="15.500" r="5.200" fill="#2a2f33" stroke="#d8d8d8" stroke-width="0.900"/><text x="14.500" y="19" text-anchor="middle" font-family="Liberation Sans, sans-serif" font-size="9" font-weight="bold" fill="#fff">1</text></svg>
<div style="left:1596px;top:867px;width:1px;height:33px;background:#6a7074"></div>
</div>
</body>
</html>
